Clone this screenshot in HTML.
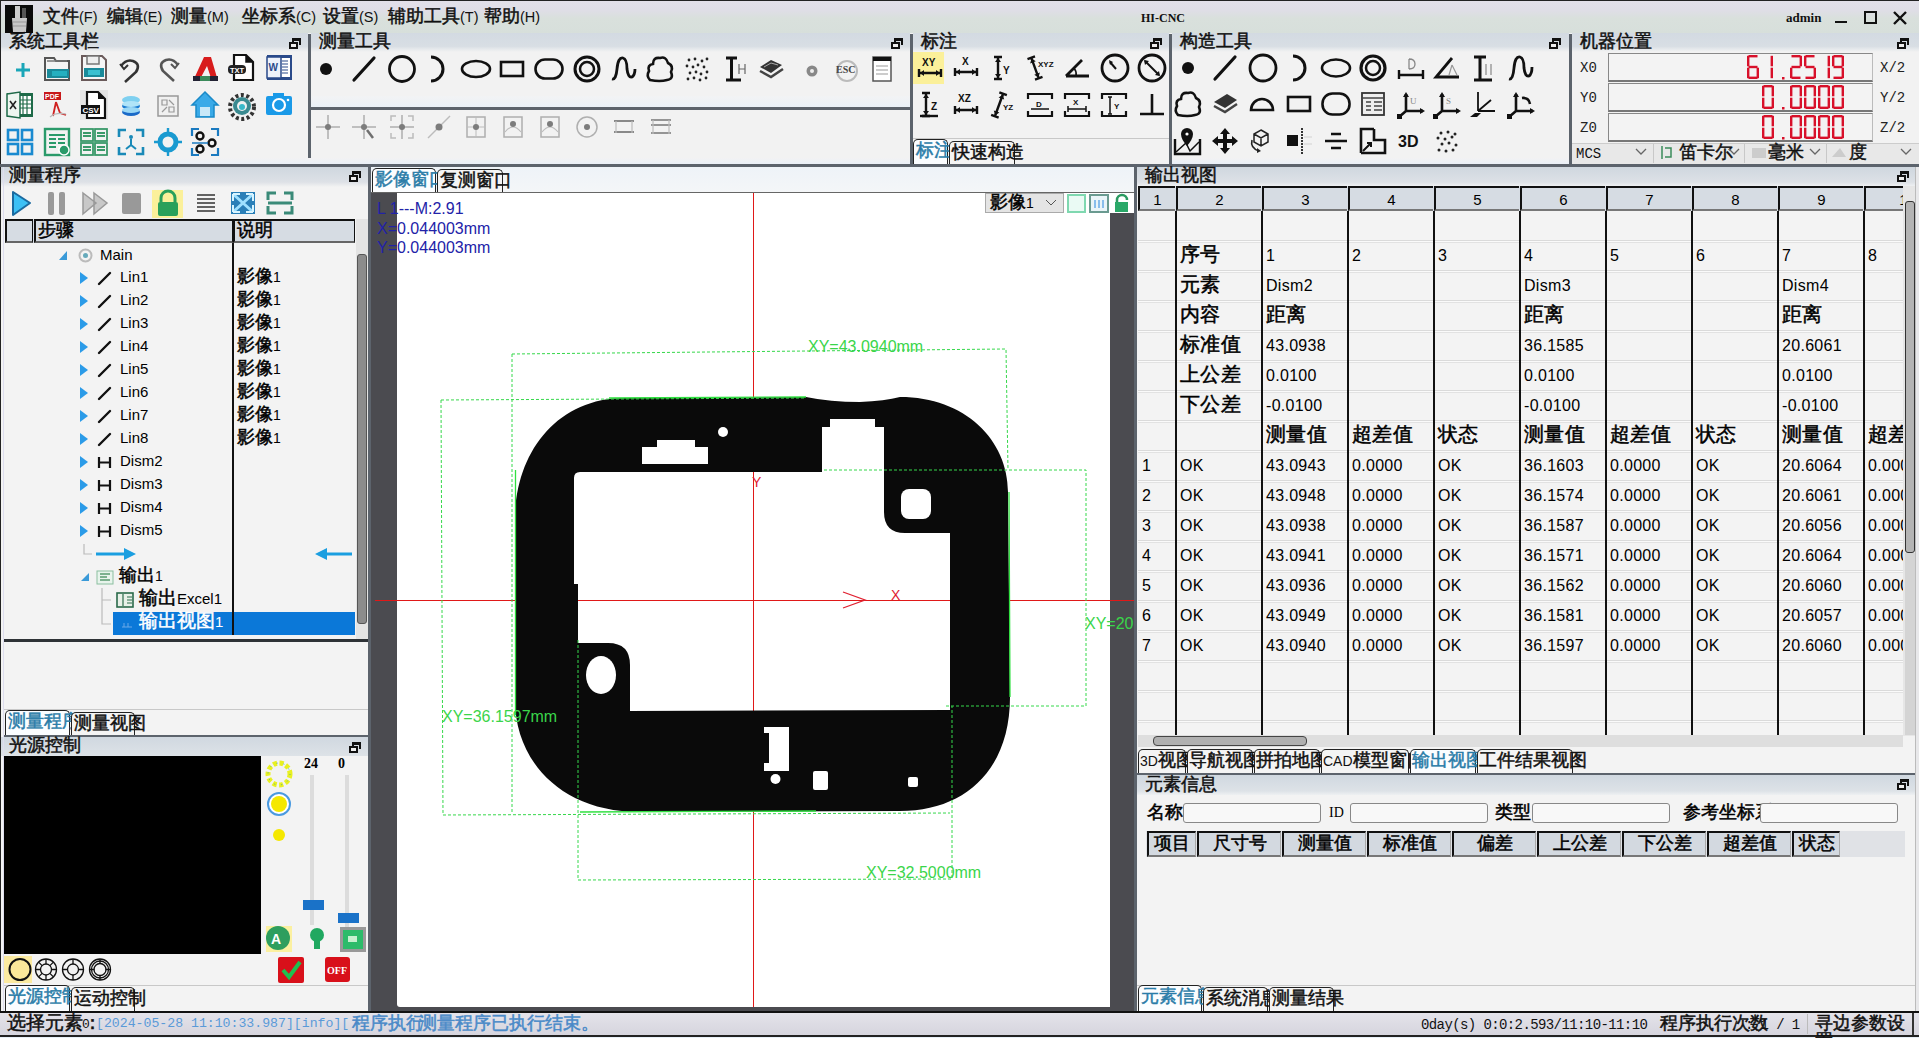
<!DOCTYPE html>
<html><head><meta charset="utf-8">
<style>
*{margin:0;padding:0;box-sizing:border-box}
html,body{width:1919px;height:1038px;overflow:hidden;background:#f3f3f3;font-family:"Liberation Sans",sans-serif;font-size:14px;color:#000}
.a{position:absolute}
.hdr{position:absolute;height:19px;background:linear-gradient(#d3dae2 0%,#d8dee4 70%,#e6e9ec 85%,#f2f2f2 100%);font-size:14px;line-height:18px;padding-left:8px;color:#111}
.vsep{position:absolute;width:3px;background:#5c636c}
.hsep{position:absolute;height:3px;background:#5c636c}
.flt{position:absolute;width:12px;height:11px}
.flt:before{content:"";position:absolute;left:3px;top:0;width:9px;height:7px;border:2px solid #111;border-bottom:0;box-sizing:border-box;border-top-width:3px}
.flt:after{content:"";position:absolute;left:0;top:4px;width:9px;height:7px;border:2px solid #111;box-sizing:border-box;background:#eee}
.tab{position:absolute;height:24px;border:1.5px solid #222;border-bottom:0;border-radius:5px 5px 0 0;background:#f4f4f4;font-size:14px;line-height:22px;padding:0 2px;color:#111;white-space:nowrap}
.tab.sel{color:#2a7ca8;background:#fbfdff}
.mono{font-family:"Liberation Mono",monospace}
.serif{font-family:"Liberation Serif",serif}
.c{font-size:1.25em;line-height:0;-webkit-text-stroke:0.5px}
</style></head><body>
<!-- outer frame -->
<div class="a" style="left:0;top:0;width:1919px;height:1px;background:#222"></div>
<div class="a" style="left:0;top:0;width:1px;height:1038px;background:#222"></div>

<!-- menu bar -->
<div class="a" style="left:1px;top:1px;width:1918px;height:32px;background:linear-gradient(#e2e0e9 0%,#dfdee6 30%,#d9e0dc 55%,#d7dfdb 100%)"></div>
<div class="a" style="left:5px;top:5px;width:28px;height:28px;background:#0a0a0a"></div>
<svg class="a" style="left:5px;top:5px" width="28" height="28"><rect x="10" y="1" width="5" height="12" fill="#ccc"/><rect x="17" y="3" width="4" height="10" fill="#555"/><path d="M7 13 H22 L21 27 H8 Z" fill="#c8c8c8"/><path d="M8 17h13M8 21h13" stroke="#999" stroke-width="1"/></svg>
<div class="a" style="left:43px;top:8px;font-size:14.5px;line-height:18px;white-space:nowrap;color:#111"><span class="c">文件</span>(F)</div><div class="a" style="left:107px;top:8px;font-size:14.5px;line-height:18px;white-space:nowrap;color:#111"><span class="c">编辑</span>(E)</div><div class="a" style="left:171px;top:8px;font-size:14.5px;line-height:18px;white-space:nowrap;color:#111"><span class="c">测量</span>(M)</div><div class="a" style="left:242px;top:8px;font-size:14.5px;line-height:18px;white-space:nowrap;color:#111"><span class="c">坐标系</span>(C)</div><div class="a" style="left:323px;top:8px;font-size:14.5px;line-height:18px;white-space:nowrap;color:#111"><span class="c">设置</span>(S)</div><div class="a" style="left:388px;top:8px;font-size:14.5px;line-height:18px;white-space:nowrap;color:#111"><span class="c">辅助工具</span>(T)</div><div class="a" style="left:484px;top:8px;font-size:14.5px;line-height:18px;white-space:nowrap;color:#111"><span class="c">帮助</span>(H)</div>
<div class="a serif" style="left:1141px;top:11px;font-size:12px;font-weight:bold;color:#111">HI-CNC</div>
<div class="a serif" style="left:1786px;top:10px;font-size:13px;font-weight:bold;color:#111">admin</div>
<div class="a" style="left:1835px;top:21px;width:12px;height:2px;background:#111"></div>
<div class="a" style="left:1864px;top:11px;width:13px;height:13px;border:2px solid #111"></div>
<svg class="a" style="left:1892px;top:10px" width="16" height="16"><path d="M2 2 L14 14 M14 2 L2 14" stroke="#111" stroke-width="2.4"/></svg>

<!-- toolbar area -->
<div class="a" style="left:1px;top:33px;width:1918px;height:131px;background:#f2f2f2"></div>
<div class="hdr" style="left:1px;top:33px;width:307px"><span class="c">系统工具栏</span></div>
<div class="hdr" style="left:311px;top:33px;width:599px"><span class="c">测量工具</span></div>
<div class="hdr" style="left:913px;top:33px;width:256px"><span class="c">标注</span></div>
<div class="hdr" style="left:1172px;top:33px;width:397px"><span class="c">构造工具</span></div>
<div class="hdr" style="left:1572px;top:33px;width:347px"><span class="c">机器位置</span></div>
<div class="flt" style="left:289px;top:38px"></div>
<div class="flt" style="left:891px;top:38px"></div>
<div class="flt" style="left:1150px;top:38px"></div>
<div class="flt" style="left:1549px;top:38px"></div>
<div class="flt" style="left:1897px;top:38px"></div>
<svg class="a" style="left:0;top:0" width="310" height="164"><g transform="translate(8,55)"><path d="M15 8v14M8 15h14" stroke="#1aa6b8" stroke-width="3"/></g><g transform="translate(42,53)"><path d="M3 5h9l2 3h13v19H3z" fill="#f4f4f4" stroke="#555" stroke-width="2"/><path d="M5 8h20" stroke="#777" stroke-width="1.5"/><rect x="5" y="16" width="22" height="9" fill="#1a8a9a"/><rect x="10" y="18" width="15" height="5" fill="#25b0c0"/></g><g transform="translate(79,53)"><path d="M3 3h20l4 4v20H3z" fill="#f6f6f6" stroke="#6a5a5a" stroke-width="2"/><rect x="8" y="3" width="12" height="8" fill="#eee" stroke="#777" stroke-width="1.5"/><rect x="5" y="15" width="20" height="9" fill="#1a8a9a"/><rect x="9" y="17" width="12" height="5" fill="#3ac0d0"/></g><g transform="translate(116,55)"><path d="M5 11 Q10 4 17 6 Q25 9 20 17 L9 27" fill="none" stroke="#333" stroke-width="2.6"/><path d="M4 9 L8 14 L12 10" fill="none" stroke="#333" stroke-width="2"/></g><g transform="translate(153,54)"><path d="M25 11 Q20 4 13 6 Q5 9 10 17 L21 27" fill="none" stroke="#555" stroke-width="2.6"/><path d="M26 9 L22 14 L18 10" fill="none" stroke="#555" stroke-width="2"/></g><g transform="translate(190,54)"><path d="M3 27 L14 3 L21 3 L28 27 L22 27 L17 12 L9 27 Z" fill="#d81c1c"/><rect x="3" y="22" width="25" height="5" fill="#223"/><rect x="10" y="22" width="10" height="5" fill="#3a8a5a"/></g><g transform="translate(227,53)"><path d="M7 2h12l7 7v18H7z" fill="#fff" stroke="#111" stroke-width="2.2"/><path d="M19 2v7h7" fill="#111" stroke="#111" stroke-width="1.5"/><rect x="1" y="12" width="18" height="9" rx="4" fill="#222"/><text x="3" y="20" font-size="7.5" font-weight="bold" fill="#fff" font-family="Liberation Sans">TXT</text></g><g transform="translate(264,53)"><rect x="3" y="2" width="25" height="25" fill="#2a4a8a"/><rect x="16" y="5" width="10" height="19" fill="#fff"/><path d="M18 8h6M18 11h6M18 14h6M18 17h6M18 20h6" stroke="#2a4a8a" stroke-width="1.2"/><rect x="3" y="4" width="14" height="21" fill="#eef2fa" stroke="#2a4a8a" stroke-width="1.5"/><text x="4.5" y="18" font-size="10" font-weight="bold" fill="#2a4a8a" font-family="Liberation Sans">W</text></g><g transform="translate(5,90)"><rect x="2" y="3" width="26" height="24" fill="#1e6a48"/><rect x="14" y="6" width="12" height="18" fill="#fff"/><path d="M14 10h12M14 14h12M14 18h12M18 6v18M22 6v18" stroke="#1e6a48" stroke-width="1.2"/><path d="M2 4 L15 2 V28 L2 26 Z" fill="#eef6f0" stroke="#1e6a48" stroke-width="1.5"/><path d="M5 11 L11 19 M11 11 L5 19" stroke="#222" stroke-width="1.6"/></g><g transform="translate(42,90)"><rect x="2" y="2" width="17" height="8" fill="#c8181a"/><text x="3" y="9" font-size="7" font-weight="bold" fill="#fff" font-family="Liberation Sans">PDF</text><path d="M14 12 L11 26 M14 12 L18 23 L24 25" fill="none" stroke="#d02020" stroke-width="1.8"/><path d="M8 27 Q14 22 24 24" fill="none" stroke="#bbb" stroke-width="1.2"/></g><g transform="translate(79,90)"><rect x="1" y="0" width="28" height="30" fill="#e4e4e4"/><path d="M8 2h11l7 7v19H8z" fill="#fff" stroke="#111" stroke-width="2.2"/><path d="M19 2v7h7" fill="#111"/><rect x="2" y="15" width="19" height="9" fill="#111"/><text x="3.5" y="23" font-size="8" font-weight="bold" fill="#fff" font-family="Liberation Sans">CSV</text></g><g transform="translate(116,91)"><ellipse cx="15" cy="9" rx="9" ry="4" fill="#7fd0f0"/><ellipse cx="15" cy="15" rx="9" ry="4" fill="#1a7ad0"/><ellipse cx="15" cy="13" rx="9" ry="3" fill="#b0e4f8"/><ellipse cx="15" cy="21" rx="9" ry="4" fill="#1a6ac8"/><ellipse cx="15" cy="19" rx="9" ry="3" fill="#9ad8f6"/></g><g transform="translate(153,91)"><rect x="5" y="5" width="20" height="20" fill="#f0f0f0" stroke="#999" stroke-width="1.5"/><path d="M9 9h5v5H9zM16 16h5v5h-5zM16 9l5 5M9 21l5-5" fill="none" stroke="#999" stroke-width="1.2"/></g><g transform="translate(190,90)"><path d="M15 2 L28 15 L24 15 L24 27 L6 27 L6 15 L2 15 Z" fill="#3aaae8" stroke="#1a8ac8" stroke-width="1.5"/><rect x="10" y="17" width="10" height="9" fill="#c8e8f8"/></g><g transform="translate(227,92)"><circle cx="15" cy="15" r="12" fill="none" stroke="#333" stroke-width="4" stroke-dasharray="3 2.5"/><circle cx="15" cy="14" r="9" fill="#3a8a90"/><circle cx="15" cy="14" r="5" fill="#f0f0f0"/><circle cx="15" cy="15" r="3" fill="#3ab8c8"/></g><g transform="translate(264,90)"><rect x="2" y="6" width="26" height="19" rx="2" fill="#1a9ae8"/><rect x="9" y="3" width="11" height="5" fill="#1a9ae8"/><circle cx="15" cy="15" r="6" fill="none" stroke="#fff" stroke-width="2.2"/><circle cx="24" cy="10" r="1.3" fill="#fff"/></g><g transform="translate(5,127)"><g fill="none" stroke="#1a8ad0" stroke-width="2.6"><rect x="3" y="3" width="10" height="10"/><rect x="17" y="3" width="10" height="10"/><rect x="3" y="17" width="10" height="10"/><rect x="17" y="17" width="10" height="10"/></g></g><g transform="translate(42,127)"><rect x="3" y="2" width="24" height="26" fill="none" stroke="#2a9a6a" stroke-width="2.4"/><path d="M7 8h16M7 12h7M16 12h7M7 16h7M16 16h7M7 20h7" stroke="#2a9a6a" stroke-width="2.2"/><circle cx="22" cy="23" r="5" fill="#2a9a6a" stroke="#fff" stroke-width="1.5"/></g><g transform="translate(79,127)"><g fill="none" stroke="#3a9a6a" stroke-width="1.8"><rect x="2" y="2" width="12" height="12"/><rect x="16" y="2" width="12" height="12"/><rect x="2" y="16" width="12" height="12"/><rect x="16" y="16" width="12" height="12"/><path d="M4 6h8M4 9h8M18 6h8M18 9h8M4 20h8M4 23h8M18 20h8M18 23h8"/></g></g><g transform="translate(116,127)"><path d="M3 10V3h7M20 3h7v7M3 20v7h7M20 27h7v-7" fill="none" stroke="#1a8ab8" stroke-width="2.6"/><circle cx="15" cy="10" r="2" fill="#1a8ab8"/><path d="M15 12v6M10 22l5-4 5 4" stroke="#1a8ab8" stroke-width="2" fill="none"/></g><g transform="translate(153,127)"><circle cx="15" cy="15" r="8" fill="none" stroke="#1a9ad0" stroke-width="5"/><path d="M15 1v6M15 23v6M1 15h6M23 15h6" stroke="#1a9ad0" stroke-width="2.4"/></g><g transform="translate(190,127)"><path d="M2 9V2h7M21 2h7v7M2 21v7h7M21 28h7v-7" fill="none" stroke="#1a7ac0" stroke-width="2.2"/><circle cx="10" cy="9" r="3.5" fill="none" stroke="#111" stroke-width="2.4"/><circle cx="10" cy="22" r="3.5" fill="none" stroke="#111" stroke-width="2.4"/><circle cx="22" cy="16" r="3.5" fill="none" stroke="#111" stroke-width="2.4"/><path d="M2 16h16" stroke="#1a7ac0" stroke-width="1.5"/></g></svg>
<div class="vsep" style="left:308px;top:34px;height:130px"></div>
<svg class="a" style="left:0;top:0" width="910" height="164"><g transform="translate(311,54)"><circle cx="15" cy="15" r="6" fill="#111"/></g><g transform="translate(349,54)"><path d="M5 26 L25 4" stroke="#111" stroke-width="3.2" stroke-linecap="round"/></g><g transform="translate(387,54)"><circle cx="15" cy="15" r="12.5" fill="none" stroke="#111" stroke-width="2.8"/></g><g transform="translate(422,54)"><path d="M9 3 A12 12 0 0 1 9 27" fill="none" stroke="#111" stroke-width="3"/></g><g transform="translate(461,54)"><ellipse cx="15" cy="15" rx="14" ry="8" fill="none" stroke="#111" stroke-width="2.6"/></g><g transform="translate(497,54)"><rect x="4" y="8" width="22" height="14" fill="none" stroke="#111" stroke-width="2.6"/></g><g transform="translate(534,54)"><rect x="1.5" y="5.5" width="27" height="19" rx="9.5" fill="none" stroke="#111" stroke-width="2.6"/></g><g transform="translate(572,54)"><circle cx="15" cy="15" r="12" fill="none" stroke="#111" stroke-width="3"/><circle cx="15" cy="15" r="7" fill="none" stroke="#111" stroke-width="2.5"/></g><g transform="translate(609,54)"><path d="M3 25 Q7 26 8 15 Q9 3 14 4 Q18 5 18 15 Q19 24 23 23 Q26 21 26 15" fill="none" stroke="#111" stroke-width="2.8"/></g><g transform="translate(645,54)"><path d="M5 26 Q1 22 4 17 Q2 11 8 10 Q8 3 15 4 Q21 2 23 9 Q29 12 26 18 Q29 25 22 26 Q15 28 5 26 Z" fill="none" stroke="#111" stroke-width="2.6"/></g><g transform="translate(682,54)"><g fill="#222"><circle cx="7" cy="6" r="1.4"/><circle cx="13" cy="5" r="1.4"/><circle cx="20" cy="7" r="1.4"/><circle cx="25" cy="5" r="1.4"/><circle cx="5" cy="12" r="1.4"/><circle cx="11" cy="13" r="1.4"/><circle cx="16" cy="11" r="1.4"/><circle cx="22" cy="13" r="1.4"/><circle cx="8" cy="19" r="1.4"/><circle cx="14" cy="18" r="1.4"/><circle cx="19" cy="20" r="1.4"/><circle cx="25" cy="18" r="1.4"/><circle cx="6" cy="25" r="1.4"/><circle cx="12" cy="24" r="1.4"/><circle cx="18" cy="26" r="1.4"/><circle cx="24" cy="24" r="1.4"/></g></g><g transform="translate(720,54)"><path d="M6 4h11M6 26h15M11.5 4v22" stroke="#111" stroke-width="3"/><path d="M19 10v10M25 10v10M19 15h6" stroke="#666" stroke-width="1.2"/></g><g transform="translate(756,54)"><path d="M4 17 L15 23 L27 15" fill="none" stroke="#444" stroke-width="2.5"/><path d="M4 13 L15 6 L26 11 L15 19 Z" fill="#333"/><path d="M8 13 L15 9 L22 11" fill="none" stroke="#aaa" stroke-width="1"/></g><g transform="translate(797,56)"><circle cx="15" cy="15" r="5.5" fill="#888"/><circle cx="15" cy="15" r="2" fill="#eee"/></g><g transform="translate(831,55)"><circle cx="16" cy="16" r="10" fill="none" stroke="#bbb" stroke-width="2"/><text x="5" y="18" font-size="10" font-weight="bold" fill="#444" font-family="Liberation Serif">ESC</text></g><g transform="translate(867,54)"><rect x="6" y="3" width="18" height="24" fill="#fff" stroke="#555" stroke-width="1.5"/><rect x="6" y="3" width="18" height="4" fill="#111"/><path d="M9 12h12M9 16h12M9 20h12" stroke="#999" stroke-width="1"/></g><g transform="translate(313,112)"><g opacity="0.75"><path d="M3 15h24M15 3v24" stroke="#999" stroke-width="1.5"/><circle cx="15" cy="15" r="3" fill="#555"/></g></g><g transform="translate(349,112)"><g opacity="0.75"><path d="M3 15h24M15 3v24" stroke="#999" stroke-width="1.5"/><circle cx="15" cy="15" r="3" fill="#555"/><path d="M18 18 L24 26" stroke="#444" stroke-width="2.5"/></g></g><g transform="translate(387,112)"><g opacity="0.75"><path d="M3 15h24M15 3v24" stroke="#999" stroke-width="1.5"/><circle cx="15" cy="15" r="3" fill="#555"/><path d="M4 9V4h5M21 4h5v5M4 21v5h5M21 26h5v-5" fill="none" stroke="#aaa" stroke-width="1.5"/></g></g><g transform="translate(424,112)"><g opacity="0.75"><path d="M4 26 L26 4" stroke="#aaa" stroke-width="1.5"/><circle cx="15" cy="15" r="3.5" fill="#555"/></g></g><g transform="translate(461,112)"><g opacity="0.75"><rect x="6" y="5" width="18" height="20" fill="none" stroke="#999" stroke-width="1.5"/><path d="M6 15h18M15 5v20" stroke="#aaa" stroke-width="1"/><circle cx="15" cy="15" r="3" fill="#555"/></g></g><g transform="translate(498,112)"><g opacity="0.75"><rect x="6" y="5" width="18" height="20" fill="none" stroke="#999" stroke-width="1.5"/><path d="M7 20 Q15 10 23 20" fill="none" stroke="#aaa" stroke-width="1.2"/><circle cx="15" cy="12" r="3" fill="#555"/></g></g><g transform="translate(535,112)"><g opacity="0.75"><rect x="6" y="5" width="18" height="20" fill="none" stroke="#999" stroke-width="1.5"/><path d="M7 20 Q15 10 23 20" fill="none" stroke="#aaa" stroke-width="1.2"/><circle cx="15" cy="12" r="3" fill="#555"/></g></g><g transform="translate(572,112)"><g opacity="0.75"><circle cx="15" cy="15" r="10" fill="none" stroke="#999" stroke-width="1.5"/><circle cx="15" cy="15" r="3" fill="#555"/></g></g><g transform="translate(609,112)"><g opacity="0.75"><path d="M5 9h20M5 20h20" stroke="#666" stroke-width="2"/><path d="M7 9v12M23 9v12" stroke="#aaa" stroke-width="1.2"/></g></g><g transform="translate(646,112)"><g opacity="0.75"><path d="M5 8h20M5 13h20M5 21h20" stroke="#777" stroke-width="1.8"/><path d="M7 8v14M23 8v14" stroke="#aaa" stroke-width="1.2"/></g></g></svg>
<div class="vsep" style="left:910px;top:34px;height:130px"></div>
<svg class="a" style="left:0;top:0" width="1170" height="164"><rect x="913" y="52" width="31" height="32" fill="#fbf09a"/><g transform="translate(915,53)"><text x="7" y="13" font-size="10" font-family="Liberation Sans" font-weight="bold" fill="#111">XY</text><path d="M4 16v8M26 16v8M4 20h22" stroke="#111" stroke-width="2.4"/><path d="M5 20l4-3v6zM25 20l-4-3v6z" fill="#111"/></g><g transform="translate(951,53)"><text x="11" y="12" font-size="10" font-family="Liberation Sans" font-weight="bold" fill="#111">X</text><path d="M4 15v8M26 15v8M4 19h22" stroke="#111" stroke-width="2.4"/><path d="M5 19l4-3v6zM25 19l-4-3v6z" fill="#111"/></g><g transform="translate(987,53)"><path d="M7 4h8M7 26h8M11 4v22" stroke="#111" stroke-width="2.4"/><path d="M11 5l-3 4h6zM11 25l-3-4h6z" fill="#111"/><text x="16" y="21" font-size="10" font-family="Liberation Sans" font-weight="bold" fill="#111">Y</text></g><g transform="translate(1025,53)"><g transform="rotate(-20 10 15)"><path d="M6 4h8M6 26h8M10 4v22" stroke="#111" stroke-width="2.4"/><path d="M10 5l-3 4h6zM10 25l-3-4h6z" fill="#111"/></g><text x="13" y="14" font-size="8" font-family="Liberation Sans" font-weight="bold" fill="#111">XYZ</text></g><g transform="translate(1062,53)"><path d="M4 23 L20 7 M4 23 H27" stroke="#111" stroke-width="2.8" fill="none"/><path d="M12 15 Q15 19 14 23" stroke="#111" stroke-width="1.5" fill="none"/></g><g transform="translate(1100,53)"><circle cx="15" cy="15" r="13" fill="none" stroke="#111" stroke-width="2.8"/><path d="M10 9 L16 16" stroke="#111" stroke-width="2"/><path d="M9 7l1 5 3-3z" fill="#111"/></g><g transform="translate(1137,53)"><circle cx="15" cy="15" r="13" fill="none" stroke="#111" stroke-width="2.8"/><path d="M8 8 L22 22" stroke="#111" stroke-width="2"/><path d="M7 7l1 5 4-4zM23 23l-1-5-4 4z" fill="#111"/></g><g transform="translate(915,90)"><path d="M7 3h8M7 26h8M11 3v23" stroke="#111" stroke-width="2.4"/><path d="M11 4l-3 4h6zM11 25l-3-4h6z" fill="#111"/><text x="16" y="20" font-size="10" font-family="Liberation Sans" font-weight="bold" fill="#111">Z</text><path d="M5 26h18" stroke="#111" stroke-width="2.4"/></g><g transform="translate(951,90)"><text x="7" y="12" font-size="10" font-family="Liberation Sans" font-weight="bold" fill="#111">XZ</text><path d="M4 16v8M26 16v8M4 20h22" stroke="#111" stroke-width="2.4"/><path d="M5 20l4-3v6zM25 20l-4-3v6z" fill="#111"/></g><g transform="translate(988,90)"><g transform="rotate(20 11 15)"><path d="M7 3h8M7 27h8M11 3v24" stroke="#111" stroke-width="2.4"/><path d="M11 4l-3 4h6zM11 26l-3-4h6z" fill="#111"/></g><text x="15" y="20" font-size="8" font-family="Liberation Sans" font-weight="bold" fill="#111">YZ</text></g><g transform="translate(1025,90)"><path d="M3 9V4h24v5M3 21v5h24v-5" fill="none" stroke="#111" stroke-width="2.2"/><path d="M6 19h18" stroke="#111" stroke-width="1.5"/><text x="11" y="17" font-size="8" font-family="Liberation Sans" font-weight="bold" fill="#111">D</text></g><g transform="translate(1062,90)"><path d="M3 9V4h24v5M3 21v5h24v-5" fill="none" stroke="#111" stroke-width="2.2"/><path d="M6 19h18M6 16v6M24 16v6" stroke="#111" stroke-width="1.5"/><text x="11" y="15" font-size="8" font-family="Liberation Sans" font-weight="bold" fill="#111">X</text></g><g transform="translate(1099,90)"><path d="M3 9V4h24v5M3 21v5h24v-5" fill="none" stroke="#111" stroke-width="2.2"/><path d="M11 7v17M9 7h4M9 24h4" stroke="#111" stroke-width="1.5"/><text x="15" y="19" font-size="8" font-family="Liberation Sans" font-weight="bold" fill="#111">Y</text></g><g transform="translate(1137,90)"><path d="M3 24h24M15 4v20" stroke="#111" stroke-width="2.6"/></g></svg><div class="a" style="left:913px;top:138px;width:256px;height:1px;background:#c8c8c8"></div><div class="tab sel" style="left:913px;top:139px;width:35px;height:25px"><span class="c">标注</span></div><div class="tab" style="left:949px;top:141px;width:66px;height:23px"><span class="c">快速构造</span></div>
<div class="vsep" style="left:1169px;top:34px;height:130px"></div>
<svg class="a" style="left:0;top:0" width="1570" height="164"><g transform="translate(1173,53)"><circle cx="15" cy="15" r="6" fill="#111"/></g><g transform="translate(1210,53)"><path d="M5 26 L25 4" stroke="#111" stroke-width="3.2" stroke-linecap="round"/></g><g transform="translate(1248,53)"><circle cx="15" cy="15" r="13" fill="none" stroke="#111" stroke-width="2.8"/></g><g transform="translate(1284,53)"><path d="M9 3 A12 12 0 0 1 9 27" fill="none" stroke="#111" stroke-width="3"/></g><g transform="translate(1321,53)"><ellipse cx="15" cy="15" rx="14" ry="8.5" fill="none" stroke="#111" stroke-width="2.6"/></g><g transform="translate(1358,53)"><circle cx="15" cy="15" r="12" fill="none" stroke="#111" stroke-width="3.2"/><circle cx="15" cy="15" r="7" fill="none" stroke="#111" stroke-width="2.5"/></g><g transform="translate(1396,53)"><path d="M3 17v9M27 17v9M3 22h24" stroke="#111" stroke-width="2.4"/><path d="M13 6v10M13 6q6 0 6 5t-6 5" stroke="#888" stroke-width="1.3" fill="none"/></g><g transform="translate(1432,53)"><path d="M27 24 H4 L20 5" stroke="#111" stroke-width="2.8" fill="none"/><path d="M20 12 L25 22 M20 12 L17 22" stroke="#999" stroke-width="1.2"/></g><g transform="translate(1469,53)"><path d="M5 4h12M5 27h18M11 4v23" stroke="#111" stroke-width="3"/><path d="M17 11v11M22 11v11" stroke="#888" stroke-width="1.2"/></g><g transform="translate(1506,53)"><path d="M3 26 Q7 27 8 15 Q9 3 14 4 Q18 5 18 15 Q19 24 23 23 Q26 21 26 14" fill="none" stroke="#111" stroke-width="2.8"/></g><g transform="translate(1173,89)"><path d="M5 26 Q1 22 4 17 Q2 11 8 10 Q8 3 15 4 Q21 2 23 9 Q29 12 26 18 Q29 25 22 26 Q15 28 5 26 Z" fill="none" stroke="#111" stroke-width="2.6"/></g><g transform="translate(1210,89)"><path d="M4 17 L15 23 L27 15" fill="none" stroke="#444" stroke-width="2.5"/><path d="M4 13 L17 5 L27 11 L15 19 Z" fill="#333"/></g><g transform="translate(1247,89)"><path d="M4 21 A11 11 0 0 1 26 21 Z" fill="none" stroke="#111" stroke-width="2.6"/></g><g transform="translate(1284,89)"><rect x="4" y="8" width="22" height="14" fill="none" stroke="#111" stroke-width="2.6"/></g><g transform="translate(1321,89)"><rect x="1.5" y="4.5" width="27" height="21" rx="10" fill="none" stroke="#111" stroke-width="2.6"/></g><g transform="translate(1358,89)"><rect x="4" y="4" width="22" height="22" fill="#eee" stroke="#333" stroke-width="1.8"/><path d="M4 9h22M8 13h5M16 13h8M8 17h5M16 17h8M8 21h5M16 21h8" stroke="#444" stroke-width="1.6"/></g><g transform="translate(1396,89)"><path d="M10 22 V5 M10 22 H27 M10 22 L3 28" stroke="#111" stroke-width="2.6" fill="none"/><path d="M10 3l-3 5h6zM29 22l-5-3v6z" fill="#111"/><rect x="1" y="25" width="5" height="5" fill="#111"/><text x="14" y="15" font-size="9" fill="#888" font-family="Liberation Serif">U</text></g><g transform="translate(1432,89)"><path d="M10 22 V5 M10 22 H27 M10 22 L3 28" stroke="#111" stroke-width="2.6" fill="none"/><path d="M10 3l-3 5h6zM29 22l-5-3v6z" fill="#111"/><rect x="1" y="25" width="5" height="5" fill="#111"/><text x="14" y="15" font-size="9" fill="#888" font-family="Liberation Serif">S</text></g><g transform="translate(1469,89)"><path d="M9 22 V3 M9 22 H26 M9 22 L22 11" stroke="#111" stroke-width="1.8" fill="none"/><path d="M1 28 L6 24 L12 24 L8 28 Z" fill="#111"/></g><g transform="translate(1506,89)"><path d="M10 22 V5 M10 22 H27 M10 22 L3 28" stroke="#111" stroke-width="2.6" fill="none"/><path d="M10 3l-3 5h6zM29 22l-5-3v6z" fill="#111"/><rect x="1" y="25" width="5" height="5" fill="#111"/><path d="M16 9 Q23 8 24 15" stroke="#111" stroke-width="2.5" fill="none"/></g><g transform="translate(1173,126)"><path d="M2 13v15h25V13" fill="none" stroke="#111" stroke-width="2.4"/><path d="M3 26 L13 17 L17 25 L26 16" fill="none" stroke="#111" stroke-width="1.5"/><path d="M14 2 a6 6 0 0 1 6 6 q0 5 -6 12 q-6 -7 -6 -12 a6 6 0 0 1 6 -6z" fill="#111"/><circle cx="14" cy="8" r="1.6" fill="#fff"/></g><g transform="translate(1210,126)"><path d="M15 2 L20 8 H17 V13 H22 V10 L28 15 L22 20 V17 H17 V22 H20 L15 28 L10 22 H13 V17 H8 V20 L2 15 L8 10 V13 H13 V8 H10 Z" fill="#111"/></g><g transform="translate(1247,126)"><path d="M14 4 L21 8 V16 L14 20 L7 16 V8 Z M7 8 L14 12 L21 8 M14 12 V20" fill="none" stroke="#222" stroke-width="1.5"/><path d="M5 14 Q3 22 12 25" fill="none" stroke="#222" stroke-width="1.6"/><path d="M10 22l4 3-4 2z" fill="#222"/></g><g transform="translate(1284,126)"><rect x="3" y="9" width="11" height="11" fill="#111"/><path d="M18 2v26" stroke="#333" stroke-width="2" stroke-dasharray="2 1"/><path d="M20 11h8M20 18h8" stroke="#ddd" stroke-width="1.5"/></g><g transform="translate(1321,126)"><path d="M10 8h10M4 15h22M10 22h10" stroke="#111" stroke-width="2.6"/></g><g transform="translate(1358,126)"><path d="M3 27 V3 H16 M3 27 H27 V14 H16 V3" fill="none" stroke="#111" stroke-width="2.6"/><path d="M5 25 L12 18 M9 17h4v4" stroke="#111" stroke-width="2" fill="none"/></g><g transform="translate(1396,126)"><text x="2" y="21" font-size="16" font-family="Liberation Sans" font-weight="bold" fill="#111">3D</text></g><g transform="translate(1432,126)"><g fill="#222"><circle cx="9" cy="7" r="1.5"/><circle cx="16" cy="6" r="1.5"/><circle cx="23" cy="8" r="1.5"/><circle cx="6" cy="12" r="1.5"/><circle cx="13" cy="13" r="1.5"/><circle cx="20" cy="11" r="1.5"/><circle cx="10" cy="18" r="1.5"/><circle cx="17" cy="17" r="1.5"/><circle cx="24" cy="19" r="1.5"/><circle cx="7" cy="24" r="1.5"/><circle cx="14" cy="25" r="1.5"/><circle cx="21" cy="24" r="1.5"/></g></g></svg>
<div class="vsep" style="left:1569px;top:34px;height:130px"></div>
<div class="a" style="left:311px;top:96px;width:599px;height:11px;background:linear-gradient(#f2f3f4,#eaf1f8)"></div><div class="a" style="left:311px;top:107px;width:599px;height:3px;background:#5c636c"></div><div class="a" style="left:1px;top:158px;width:909px;height:6px;background:linear-gradient(#f2f2f3,#eaf0f7)"></div><div class="a" style="left:1172px;top:158px;width:397px;height:6px;background:linear-gradient(#f2f2f3,#eaf0f7)"></div>
<div class="a" style="left:1572px;top:52px;width:347px;height:112px;background:#f2f2f2"></div>
<div class="a" style="left:1608px;top:53px;width:265px;height:29px;background:#f3f3f3;border:1px solid #888;border-bottom:2px solid #777;border-right:1px solid #bbb"></div>
<div class="a mono" style="left:1580px;top:60px;font-size:14px;line-height:16px;color:#222">X0</div>
<div class="a mono" style="left:1880px;top:60px;font-size:14px;line-height:16px;color:#222">X/2</div>
<div class="a" style="left:1608px;top:83px;width:265px;height:29px;background:#f3f3f3;border:1px solid #888;border-bottom:2px solid #777;border-right:1px solid #bbb"></div>
<div class="a mono" style="left:1580px;top:90px;font-size:14px;line-height:16px;color:#222">Y0</div>
<div class="a mono" style="left:1880px;top:90px;font-size:14px;line-height:16px;color:#222">Y/2</div>
<div class="a" style="left:1608px;top:113px;width:265px;height:29px;background:#f3f3f3;border:1px solid #888;border-bottom:2px solid #777;border-right:1px solid #bbb"></div>
<div class="a mono" style="left:1580px;top:120px;font-size:14px;line-height:16px;color:#222">Z0</div>
<div class="a mono" style="left:1880px;top:120px;font-size:14px;line-height:16px;color:#222">Z/2</div>
<svg class="a" style="left:0;top:0" width="1919" height="164"><rect x="1748.5" y="55.0" width="9.0" height="2.4" fill="#d8102a"/><rect x="1748.5" y="65.8" width="9.0" height="2.4" fill="#d8102a"/><rect x="1748.5" y="76.6" width="9.0" height="2.4" fill="#d8102a"/><rect x="1747.0" y="55.8" width="2.4" height="10.5" fill="#d8102a"/><rect x="1747.0" y="67.7" width="2.4" height="10.5" fill="#d8102a"/><rect x="1756.6" y="67.7" width="2.4" height="10.5" fill="#d8102a"/><rect x="1770.6" y="55.8" width="2.4" height="10.5" fill="#d8102a"/><rect x="1770.6" y="67.7" width="2.4" height="10.5" fill="#d8102a"/><rect x="1782" y="77" width="2.5" height="2.5" fill="#d8102a"/><rect x="1791.5" y="55.0" width="9.0" height="2.4" fill="#d8102a"/><rect x="1791.5" y="65.8" width="9.0" height="2.4" fill="#d8102a"/><rect x="1791.5" y="76.6" width="9.0" height="2.4" fill="#d8102a"/><rect x="1799.6" y="55.8" width="2.4" height="10.5" fill="#d8102a"/><rect x="1790.0" y="67.7" width="2.4" height="10.5" fill="#d8102a"/><rect x="1805.5" y="55.0" width="9.0" height="2.4" fill="#d8102a"/><rect x="1805.5" y="65.8" width="9.0" height="2.4" fill="#d8102a"/><rect x="1805.5" y="76.6" width="9.0" height="2.4" fill="#d8102a"/><rect x="1804.0" y="55.8" width="2.4" height="10.5" fill="#d8102a"/><rect x="1813.6" y="67.7" width="2.4" height="10.5" fill="#d8102a"/><rect x="1827.6" y="55.8" width="2.4" height="10.5" fill="#d8102a"/><rect x="1827.6" y="67.7" width="2.4" height="10.5" fill="#d8102a"/><rect x="1833.5" y="55.0" width="9.0" height="2.4" fill="#d8102a"/><rect x="1833.5" y="65.8" width="9.0" height="2.4" fill="#d8102a"/><rect x="1833.5" y="76.6" width="9.0" height="2.4" fill="#d8102a"/><rect x="1832.0" y="55.8" width="2.4" height="10.5" fill="#d8102a"/><rect x="1841.6" y="55.8" width="2.4" height="10.5" fill="#d8102a"/><rect x="1841.6" y="67.7" width="2.4" height="10.5" fill="#d8102a"/><rect x="1763.5" y="85.0" width="9.0" height="2.4" fill="#d8102a"/><rect x="1763.5" y="106.6" width="9.0" height="2.4" fill="#d8102a"/><rect x="1762.0" y="85.8" width="2.4" height="10.5" fill="#d8102a"/><rect x="1771.6" y="85.8" width="2.4" height="10.5" fill="#d8102a"/><rect x="1762.0" y="97.7" width="2.4" height="10.5" fill="#d8102a"/><rect x="1771.6" y="97.7" width="2.4" height="10.5" fill="#d8102a"/><rect x="1782" y="107" width="2.5" height="2.5" fill="#d8102a"/><rect x="1791.5" y="85.0" width="9.0" height="2.4" fill="#d8102a"/><rect x="1791.5" y="106.6" width="9.0" height="2.4" fill="#d8102a"/><rect x="1790.0" y="85.8" width="2.4" height="10.5" fill="#d8102a"/><rect x="1799.6" y="85.8" width="2.4" height="10.5" fill="#d8102a"/><rect x="1790.0" y="97.7" width="2.4" height="10.5" fill="#d8102a"/><rect x="1799.6" y="97.7" width="2.4" height="10.5" fill="#d8102a"/><rect x="1805.5" y="85.0" width="9.0" height="2.4" fill="#d8102a"/><rect x="1805.5" y="106.6" width="9.0" height="2.4" fill="#d8102a"/><rect x="1804.0" y="85.8" width="2.4" height="10.5" fill="#d8102a"/><rect x="1813.6" y="85.8" width="2.4" height="10.5" fill="#d8102a"/><rect x="1804.0" y="97.7" width="2.4" height="10.5" fill="#d8102a"/><rect x="1813.6" y="97.7" width="2.4" height="10.5" fill="#d8102a"/><rect x="1819.5" y="85.0" width="9.0" height="2.4" fill="#d8102a"/><rect x="1819.5" y="106.6" width="9.0" height="2.4" fill="#d8102a"/><rect x="1818.0" y="85.8" width="2.4" height="10.5" fill="#d8102a"/><rect x="1827.6" y="85.8" width="2.4" height="10.5" fill="#d8102a"/><rect x="1818.0" y="97.7" width="2.4" height="10.5" fill="#d8102a"/><rect x="1827.6" y="97.7" width="2.4" height="10.5" fill="#d8102a"/><rect x="1833.5" y="85.0" width="9.0" height="2.4" fill="#d8102a"/><rect x="1833.5" y="106.6" width="9.0" height="2.4" fill="#d8102a"/><rect x="1832.0" y="85.8" width="2.4" height="10.5" fill="#d8102a"/><rect x="1841.6" y="85.8" width="2.4" height="10.5" fill="#d8102a"/><rect x="1832.0" y="97.7" width="2.4" height="10.5" fill="#d8102a"/><rect x="1841.6" y="97.7" width="2.4" height="10.5" fill="#d8102a"/><rect x="1763.5" y="115.0" width="9.0" height="2.4" fill="#d8102a"/><rect x="1763.5" y="136.6" width="9.0" height="2.4" fill="#d8102a"/><rect x="1762.0" y="115.8" width="2.4" height="10.5" fill="#d8102a"/><rect x="1771.6" y="115.8" width="2.4" height="10.5" fill="#d8102a"/><rect x="1762.0" y="127.7" width="2.4" height="10.5" fill="#d8102a"/><rect x="1771.6" y="127.7" width="2.4" height="10.5" fill="#d8102a"/><rect x="1782" y="137" width="2.5" height="2.5" fill="#d8102a"/><rect x="1791.5" y="115.0" width="9.0" height="2.4" fill="#d8102a"/><rect x="1791.5" y="136.6" width="9.0" height="2.4" fill="#d8102a"/><rect x="1790.0" y="115.8" width="2.4" height="10.5" fill="#d8102a"/><rect x="1799.6" y="115.8" width="2.4" height="10.5" fill="#d8102a"/><rect x="1790.0" y="127.7" width="2.4" height="10.5" fill="#d8102a"/><rect x="1799.6" y="127.7" width="2.4" height="10.5" fill="#d8102a"/><rect x="1805.5" y="115.0" width="9.0" height="2.4" fill="#d8102a"/><rect x="1805.5" y="136.6" width="9.0" height="2.4" fill="#d8102a"/><rect x="1804.0" y="115.8" width="2.4" height="10.5" fill="#d8102a"/><rect x="1813.6" y="115.8" width="2.4" height="10.5" fill="#d8102a"/><rect x="1804.0" y="127.7" width="2.4" height="10.5" fill="#d8102a"/><rect x="1813.6" y="127.7" width="2.4" height="10.5" fill="#d8102a"/><rect x="1819.5" y="115.0" width="9.0" height="2.4" fill="#d8102a"/><rect x="1819.5" y="136.6" width="9.0" height="2.4" fill="#d8102a"/><rect x="1818.0" y="115.8" width="2.4" height="10.5" fill="#d8102a"/><rect x="1827.6" y="115.8" width="2.4" height="10.5" fill="#d8102a"/><rect x="1818.0" y="127.7" width="2.4" height="10.5" fill="#d8102a"/><rect x="1827.6" y="127.7" width="2.4" height="10.5" fill="#d8102a"/><rect x="1833.5" y="115.0" width="9.0" height="2.4" fill="#d8102a"/><rect x="1833.5" y="136.6" width="9.0" height="2.4" fill="#d8102a"/><rect x="1832.0" y="115.8" width="2.4" height="10.5" fill="#d8102a"/><rect x="1841.6" y="115.8" width="2.4" height="10.5" fill="#d8102a"/><rect x="1832.0" y="127.7" width="2.4" height="10.5" fill="#d8102a"/><rect x="1841.6" y="127.7" width="2.4" height="10.5" fill="#d8102a"/></svg>
<div class="a" style="left:1572px;top:143px;width:347px;height:21px;background:#e8e8e8;border-top:1px solid #ccc"></div>
<div class="a mono" style="left:1576px;top:146px;font-size:14px;line-height:16px;color:#111">MCS</div>
<div class="a" style="left:1653px;top:144px;width:1px;height:19px;background:#c8c8c8"></div><div class="a" style="left:1744px;top:144px;width:1px;height:19px;background:#c8c8c8"></div><div class="a" style="left:1826px;top:144px;width:1px;height:19px;background:#c8c8c8"></div>
<div class="a" style="left:1679px;top:144px;font-size:14px;line-height:18px;color:#111"><span class="c">笛卡尔</span></div>
<div class="a" style="left:1768px;top:144px;font-size:14px;line-height:18px;color:#111"><span class="c">毫米</span></div>
<div class="a" style="left:1849px;top:144px;font-size:14px;line-height:18px;color:#111"><span class="c">度</span></div>
<svg class="a" style="left:0;top:143px" width="1919" height="20"><path d="M1636 6 L1641 11 L1646 6" fill="none" stroke="#666" stroke-width="1.3"/><path d="M1729 6 L1734 11 L1739 6" fill="none" stroke="#666" stroke-width="1.3"/><path d="M1810 6 L1815 11 L1820 6" fill="none" stroke="#666" stroke-width="1.3"/><path d="M1901 6 L1906 11 L1911 6" fill="none" stroke="#666" stroke-width="1.3"/><path d="M1662 3v13M1665 5h6v9h-6" stroke="#3a8a5a" stroke-width="1.5" fill="none"/><rect x="1752" y="5" width="14" height="10" fill="#ccc"/><path d="M1832 14 L1840 5 L1846 14Z" fill="#ccc"/></svg>
<div class="hsep" style="left:0;top:164px;width:1919px"></div>

<!-- main area separators -->
<div class="vsep" style="left:368px;top:164px;height:848px"></div>
<div class="vsep" style="left:1134px;top:164px;height:848px"></div>


<!-- LEFT PANEL -->
<div class="a" style="left:1px;top:167px;width:367px;height:844px;background:#f3f3f3"></div>
<div class="hdr" style="left:1px;top:167px;width:367px;height:20px;line-height:18px;background:linear-gradient(#cfd7df 0%,#dde1e6 75%,#f3f3f3 100%)"><span class="c">测量程序</span></div>
<div class="flt" style="left:349px;top:171px"></div>
<!-- program toolbar -->
<svg class="a" style="left:0;top:188px" width="300" height="30">
 <path d="M13 4 L30 15 L13 27 Z" fill="#3cc0f5" stroke="#1a6aa0" stroke-width="2" stroke-linejoin="round"/>
 <rect x="48" y="4" width="6" height="23" rx="2" fill="#999"/><rect x="59" y="4" width="6" height="23" rx="2" fill="#999"/>
 <path d="M83 5 L96 15 L83 26 Z M94 5 L107 15 L94 26 Z" fill="#c8c8c8" stroke="#999" stroke-width="1.5"/>
 <rect x="122" y="5" width="19" height="21" rx="2" fill="#999"/>
 <rect x="152" y="2" width="31" height="29" fill="#fbf09a"/>
 <path d="M161 14 V10 a7 7 0 0 1 14 0 V14" fill="none" stroke="#2aa05a" stroke-width="3"/>
 <rect x="158" y="14" width="20" height="14" rx="2" fill="#2aa05a"/>
 <path d="M197 7h18M197 11h18M197 15h18M197 19h18M197 23h18" stroke="#333" stroke-width="1.6"/>
 <rect x="231" y="4" width="24" height="22" fill="#2a7fb8"/>
 <path d="M233 6 L253 24 M253 6 L233 24" stroke="#9fe0ff" stroke-width="3"/>
 <path d="M233 6h7M233 6v7M253 6h-7M253 6v7M233 24h7M233 24v-7M253 24h-7M253 24v-7" stroke="#d8f4ff" stroke-width="2"/>
 <path d="M268 12 V5 H276 M284 5 H292 V12 M268 18 V25 H276 M284 25 H292 V18 M268 15 H292" fill="none" stroke="#3a8a78" stroke-width="3"/>
</svg>
<!-- tree header -->
<div class="a" style="left:5px;top:219px;width:350px;height:24px;background:#d6dce3"></div>
<div class="a" style="left:5px;top:219px;width:28px;height:24px;border:2px solid #111;border-bottom-color:#666;border-right-width:1px"></div>
<div class="a" style="left:34px;top:219px;width:199px;height:24px;border:2px solid #111;border-bottom-color:#666;border-right-width:1px;font-size:14px;line-height:21px;padding-left:2px"><span class="c">步骤</span></div>
<div class="a" style="left:233px;top:219px;width:122px;height:24px;border:2px solid #111;border-bottom-color:#666;border-right-width:1px;font-size:14px;line-height:21px;padding-left:2px"><span class="c">说明</span></div>
<div class="a" style="left:232px;top:243px;width:2px;height:392px;background:#111"></div>
<!-- scrollbar -->
<div class="a" style="left:356px;top:219px;width:12px;height:420px;background:#e4e4e4"></div>
<div class="a" style="left:357px;top:254px;width:10px;height:370px;background:#8c8c8c;border:1px solid #555;border-radius:3px"></div>
<!-- tree rows -->
<div class="a" style="left:113px;top:612px;width:242px;height:23px;background:#0b78d8"></div>
<div class="a" style="left:232px;top:612px;width:2px;height:23px;background:#111"></div>
<svg class="a" style="left:56px;top:248px" width="40" height="16"><path d="M3 12 L11 12 L11 3 Z" fill="#3a9ad8"/><circle cx="29.5" cy="7.5" r="6" fill="none" stroke="#bbb" stroke-width="2"/><circle cx="29.5" cy="7.5" r="2.5" fill="#6ab"/></svg>
<div class="a" style="left:100px;top:246px;font-size:15px;line-height:18px">Main</div>
<svg class="a" style="left:78px;top:270px" width="36" height="16"><path d="M2 2 L10 8 L2 14 Z" fill="#2b9be8"/><path d="M21 14 L32 3" stroke="#111" stroke-width="2.4" stroke-linecap="round"/></svg>
<div class="a" style="left:120px;top:268px;font-size:15px;line-height:18px">Lin1</div>
<div class="a" style="left:237px;top:268px;font-size:14px;line-height:18px"><span class="c">影像</span>1</div>
<svg class="a" style="left:78px;top:293px" width="36" height="16"><path d="M2 2 L10 8 L2 14 Z" fill="#2b9be8"/><path d="M21 14 L32 3" stroke="#111" stroke-width="2.4" stroke-linecap="round"/></svg>
<div class="a" style="left:120px;top:291px;font-size:15px;line-height:18px">Lin2</div>
<div class="a" style="left:237px;top:291px;font-size:14px;line-height:18px"><span class="c">影像</span>1</div>
<svg class="a" style="left:78px;top:316px" width="36" height="16"><path d="M2 2 L10 8 L2 14 Z" fill="#2b9be8"/><path d="M21 14 L32 3" stroke="#111" stroke-width="2.4" stroke-linecap="round"/></svg>
<div class="a" style="left:120px;top:314px;font-size:15px;line-height:18px">Lin3</div>
<div class="a" style="left:237px;top:314px;font-size:14px;line-height:18px"><span class="c">影像</span>1</div>
<svg class="a" style="left:78px;top:339px" width="36" height="16"><path d="M2 2 L10 8 L2 14 Z" fill="#2b9be8"/><path d="M21 14 L32 3" stroke="#111" stroke-width="2.4" stroke-linecap="round"/></svg>
<div class="a" style="left:120px;top:337px;font-size:15px;line-height:18px">Lin4</div>
<div class="a" style="left:237px;top:337px;font-size:14px;line-height:18px"><span class="c">影像</span>1</div>
<svg class="a" style="left:78px;top:362px" width="36" height="16"><path d="M2 2 L10 8 L2 14 Z" fill="#2b9be8"/><path d="M21 14 L32 3" stroke="#111" stroke-width="2.4" stroke-linecap="round"/></svg>
<div class="a" style="left:120px;top:360px;font-size:15px;line-height:18px">Lin5</div>
<div class="a" style="left:237px;top:360px;font-size:14px;line-height:18px"><span class="c">影像</span>1</div>
<svg class="a" style="left:78px;top:385px" width="36" height="16"><path d="M2 2 L10 8 L2 14 Z" fill="#2b9be8"/><path d="M21 14 L32 3" stroke="#111" stroke-width="2.4" stroke-linecap="round"/></svg>
<div class="a" style="left:120px;top:383px;font-size:15px;line-height:18px">Lin6</div>
<div class="a" style="left:237px;top:383px;font-size:14px;line-height:18px"><span class="c">影像</span>1</div>
<svg class="a" style="left:78px;top:408px" width="36" height="16"><path d="M2 2 L10 8 L2 14 Z" fill="#2b9be8"/><path d="M21 14 L32 3" stroke="#111" stroke-width="2.4" stroke-linecap="round"/></svg>
<div class="a" style="left:120px;top:406px;font-size:15px;line-height:18px">Lin7</div>
<div class="a" style="left:237px;top:406px;font-size:14px;line-height:18px"><span class="c">影像</span>1</div>
<svg class="a" style="left:78px;top:431px" width="36" height="16"><path d="M2 2 L10 8 L2 14 Z" fill="#2b9be8"/><path d="M21 14 L32 3" stroke="#111" stroke-width="2.4" stroke-linecap="round"/></svg>
<div class="a" style="left:120px;top:429px;font-size:15px;line-height:18px">Lin8</div>
<div class="a" style="left:237px;top:429px;font-size:14px;line-height:18px"><span class="c">影像</span>1</div>
<svg class="a" style="left:78px;top:454px" width="36" height="16"><path d="M2 2 L10 8 L2 14 Z" fill="#2b9be8"/><path d="M21 3v11M32 3v11M21 8.5h11" stroke="#111" stroke-width="2.2"/></svg>
<div class="a" style="left:120px;top:452px;font-size:15px;line-height:18px">Dism2</div>
<svg class="a" style="left:78px;top:477px" width="36" height="16"><path d="M2 2 L10 8 L2 14 Z" fill="#2b9be8"/><path d="M21 3v11M32 3v11M21 8.5h11" stroke="#111" stroke-width="2.2"/></svg>
<div class="a" style="left:120px;top:475px;font-size:15px;line-height:18px">Dism3</div>
<svg class="a" style="left:78px;top:500px" width="36" height="16"><path d="M2 2 L10 8 L2 14 Z" fill="#2b9be8"/><path d="M21 3v11M32 3v11M21 8.5h11" stroke="#111" stroke-width="2.2"/></svg>
<div class="a" style="left:120px;top:498px;font-size:15px;line-height:18px">Dism4</div>
<svg class="a" style="left:78px;top:523px" width="36" height="16"><path d="M2 2 L10 8 L2 14 Z" fill="#2b9be8"/><path d="M21 3v11M32 3v11M21 8.5h11" stroke="#111" stroke-width="2.2"/></svg>
<div class="a" style="left:120px;top:521px;font-size:15px;line-height:18px">Dism5</div>
<svg class="a" style="left:80px;top:544px" width="280" height="20"><path d="M4 0v10h8" stroke="#bbb" stroke-width="1.2" fill="none"/><path d="M17 10 H127" stroke="none"/><path d="M17 10 H125" stroke="none"/></svg>
<svg class="a" style="left:84px;top:546px" width="275" height="16"><path d="M12 8 H42" stroke="#1a9ee0" stroke-width="3"/><path d="M40 2 L52 8 L40 14 Z" fill="#1a9ee0"/><path d="M240 8 H268" stroke="#1a9ee0" stroke-width="3"/><path d="M243 2 L231 8 L243 14 Z" fill="#1a9ee0"/></svg>
<svg class="a" style="left:78px;top:569px" width="36" height="16"><path d="M3 12 L11 12 L11 4 Z" fill="#3a9ad8"/><rect x="19" y="2" width="16" height="13" fill="#e8f4ec" stroke="#8bbfa0" stroke-width="1"/><path d="M22 5h10M22 8h7M22 11h10" stroke="#5a9a70" stroke-width="1.3"/></svg>
<div class="a" style="left:119px;top:567px;font-size:14px;line-height:18px"><span class="c">输出</span>1</div>
<svg class="a" style="left:95px;top:588px" width="40" height="46"><path d="M7 0 V36 H16 M7 12 H16" stroke="#bbb" stroke-width="1.2" fill="none"/></svg>
<svg class="a" style="left:115px;top:591px" width="20" height="18"><rect x="2" y="2" width="16" height="14" fill="#e8f0e8" stroke="#2a6a4a" stroke-width="1.6"/><path d="M8 3v12M12 6h5M12 9h5M12 12h5" stroke="#2a6a4a" stroke-width="1.2"/></svg>
<div class="a" style="left:139px;top:590px;font-size:15px;line-height:18px"><span class="c">输出</span>Excel1</div>
<div class="a" style="left:139px;top:613px;font-size:15px;line-height:18px;color:#fff"><span class="c">输出视图</span>1</div>
<svg class="a" style="left:120px;top:616px" width="14" height="14"><path d="M2 11h10M4 7v4M8 7v4" stroke="#6aa8e8" stroke-width="1"/></svg>

<!-- separator -->
<div class="a" style="left:4px;top:639px;width:364px;height:3px;background:#2e3236"></div>
<div class="a" style="left:4px;top:709px;width:364px;height:1px;background:#c8c8c8"></div>
<div class="tab sel" style="left:5px;top:710px;width:65px;height:25px"><span class="c">测量程序</span></div>
<div class="tab" style="left:71px;top:712px;width:64px;height:23px"><span class="c">测量视图</span></div>
<div class="a" style="left:4px;top:735px;width:364px;height:2px;background:#5c636c"></div>
<div class="hdr" style="left:1px;top:737px;width:367px;height:19px;line-height:19px;background:linear-gradient(#d0d8e0,#dde2e7)"><span class="c">光源控制</span></div>
<div class="flt" style="left:349px;top:742px"></div>
<div class="a" style="left:4px;top:756px;width:257px;height:198px;background:#000"></div>
<!-- light icons -->
<svg class="a" style="left:0;top:750px" width="368" height="240">
 <g transform="translate(279,24)"><circle r="11" fill="none" stroke="#e8f020" stroke-width="5" stroke-dasharray="4 2.5"/><circle r="11" fill="none" stroke="#4aa" stroke-width="1" stroke-dasharray="1 6"/></g>
 <circle cx="279" cy="54" r="11" fill="#fff" stroke="#4a9ae0" stroke-width="2"/><circle cx="279" cy="54" r="8" fill="#f5e800"/>
 <circle cx="279" cy="85" r="6" fill="#f5e800"/>
 <text x="304" y="18" font-family="Liberation Serif" font-weight="bold" font-size="14">24</text>
 <text x="338" y="18" font-family="Liberation Serif" font-weight="bold" font-size="14">0</text>
 <rect x="310" y="25" width="4" height="150" fill="#dcdcdc"/><rect x="345" y="25" width="4" height="160" fill="#dcdcdc"/>
 <rect x="303" y="150" width="21" height="10" fill="#1a72c8"/>
 <rect x="338" y="163" width="21" height="10" fill="#1a72c8"/>
 <rect x="266" y="176" width="26" height="26" fill="#fbf0a0"/>
 <circle cx="278" cy="188" r="12" fill="#2e9e5e"/><text x="271" y="194" font-size="14" font-weight="bold" fill="#fff">A</text>
 <circle cx="317" cy="185" r="7" fill="#20a860"/><rect x="314" y="190" width="6" height="9" fill="#20a860"/>
 <rect x="340" y="177" width="26" height="25" fill="#999"/><rect x="343" y="180" width="20" height="19" fill="#2dbb6a"/><rect x="348" y="186" width="9" height="6" fill="#c8f0d0"/>
 <rect x="278" y="207" width="26" height="26" rx="2" fill="#d8101a"/><path d="M283 220 L289 227 L300 212" fill="none" stroke="#1ec050" stroke-width="4"/>
 <rect x="325" y="207" width="25" height="25" rx="3" fill="#d8101a"/><text x="327" y="224" font-family="Liberation Serif" font-weight="bold" font-size="10" fill="#fff">OFF</text>
</svg>
<svg class="a" style="left:0;top:955px" width="130" height="30">
 <rect x="4" y="1" width="28" height="27" fill="#fbeaa0"/>
 <circle cx="20" cy="14.5" r="10.5" fill="#fbe89a" stroke="#111" stroke-width="2"/>
 <g fill="none" stroke="#111" stroke-width="1.3">
  <circle cx="46" cy="14.5" r="10.5"/><circle cx="46" cy="14.5" r="5.5"/><path d="M35.5 14.5h5M51.5 14.5h5M46 4v5M46 20v5M38.6 7.1l3.5 3.5M53.4 7.1l-3.5 3.5M38.6 21.9l3.5-3.5M53.4 21.9l-3.5-3.5"/>
  <circle cx="73" cy="14.5" r="10.5"/><circle cx="73" cy="14.5" r="5.5"/><path d="M62.5 14.5h5M78.5 14.5h5M73 4v5M73 20v5"/>
  <circle cx="100" cy="14.5" r="10.5"/><circle cx="100" cy="14.5" r="8.5"/><circle cx="100" cy="14.5" r="6"/><path d="M89.5 14.5h5M105.5 14.5h5M100 4v5M100 20v5"/>
 </g>
</svg>
<div class="a" style="left:4px;top:985px;width:364px;height:1px;background:#c8c8c8"></div>
<div class="tab sel" style="left:5px;top:985px;width:65px;height:26px"><span class="c">光源控制</span></div>
<div class="tab" style="left:71px;top:987px;width:64px;height:24px"><span class="c">运动控制</span></div>
<div class="a" style="left:3px;top:167px;width:1px;height:844px;background:#dde"></div>


<!-- CENTER IMAGE VIEW -->
<div class="a" style="left:371px;top:167px;width:763px;height:26px;background:linear-gradient(#eef3f8,#f4f6f8)"></div>
<div class="tab sel" style="left:372px;top:168px;width:64px;height:25px;line-height:23px"><span class="c">影像窗口</span></div>
<div class="tab" style="left:437px;top:169px;width:66px;height:24px;line-height:22px"><span class="c">复测窗口</span></div>
<div class="a" style="left:371px;top:192px;width:763px;height:1px;background:#666"></div>
<div class="a" style="left:371px;top:193px;width:763px;height:818px;background:#4b4b50"></div>
<div class="a" style="left:397px;top:193px;width:737px;height:20px;background:#fff"></div>
<div class="a" style="left:397px;top:193px;width:713px;height:814px;background:#fff;border-bottom-left-radius:3px"></div>
<svg class="a" style="left:371px;top:193px" width="763" height="818">
 <g transform="translate(-371,-193)">
 <!-- crosshair -->
 <line x1="753.5" y1="193" x2="753.5" y2="1007" stroke="#e01818" stroke-width="1"/>
 <line x1="375" y1="600.5" x2="1134" y2="600.5" stroke="#e01818" stroke-width="1"/>
 <!-- black part -->
 <path fill="#0a0a0a" fill-rule="evenodd" d="
  M625 398 L806 397 Q830 402 860 402 Q885 401 900 397 C965 397 1008 440 1008 492
  L1010 697 C1010 770 965 811 900 811 L640 812 C560 812 515 760 515 700 L515 520 C515 455 555 398 625 398 Z
  M580 472 L822 472 L822 427 L830 427 L830 419 L875 419 L875 427 L884 427 L884 512 Q884 533 905 533 L950 533
  L950 710 L630 711 L630 665 Q630 643 608 643 L578 643 L578 584 L574 584 L574 478 Q574 472 580 472 Z"/>
 <!-- cutouts -->
 <path fill="#fff" d="M642 447 H657 V440 H695 V447 H708 V464 H642 Z"/>
 <circle cx="723" cy="432" r="5" fill="#fff"/>
 <rect x="901" y="489" width="30" height="30" rx="8" fill="#fff"/>
 <ellipse cx="601" cy="675" rx="15" ry="19" fill="#fff"/>
 <rect x="764" y="727" width="25" height="44" fill="#fff"/><rect x="764" y="733" width="5" height="30" fill="#0a0a0a"/>
 <circle cx="775.5" cy="779" r="5" fill="#fff"/>
 <rect x="813" y="771" width="15" height="19" rx="2" fill="#fff"/>
 <rect x="908" y="777" width="10" height="10" rx="2" fill="#fff"/>
 <!-- green measurement rects -->
 <g fill="none" stroke="#35d84a" stroke-width="1" stroke-dasharray="3 2">
  <path d="M512 354 L1006 349 L1008 470 M512 354 L512 813"/>
  <path d="M441 400 L806 398 M441 400 L443 815 L950 813"/>
  <path d="M824 470 L1086 470 L1086 706 L944 706"/>
  <path d="M578 640 L578 880 L952 879 L952 706"/>
 </g>
 <g stroke="#30e040" stroke-width="1.3" fill="none">
  <path d="M515.5 470 L515.5 715 M1009 492 L1010 697 M609 398 L806 397 M580 812 L816 811"/>
 </g>
 <g font-family="Liberation Sans" font-size="16" fill="#3ad54a">
  <text x="808" y="352">XY=43.0940mm</text>
  <text x="442" y="722">XY=36.1597mm</text>
  <text x="1085" y="629">XY=20</text>
  <text x="866" y="878">XY=32.5000mm</text>
 </g>
 <g fill="#e02030" font-family="Liberation Sans" font-size="14">
  <text x="752" y="487">Y</text>
  <text x="891" y="600">X</text>
  <path d="M843 592 L865 600 L843 608" fill="none" stroke="#e02030" stroke-width="1.3"/>
 </g>
 </g>
</svg>
<div class="a" style="left:377px;top:199px;font-size:16px;line-height:19.5px;color:#2222a8;white-space:pre">L 1---M:2.91<br>X=0.044003mm<br>Y=0.044003mm</div>
<div class="a" style="left:985px;top:193px;width:79px;height:20px;background:#e4e4e4;border:1px solid #aaa;font-size:14px;line-height:18px;padding-left:4px"><span class="c">影像</span>1</div>
<svg class="a" style="left:1045px;top:199px" width="12" height="8"><path d="M1 1 L6 6 L11 1" fill="none" stroke="#555" stroke-width="1"/></svg>
<svg class="a" style="left:1064px;top:192px" width="70" height="22">
 <rect x="4" y="3" width="17" height="17" fill="#eafaf4" stroke="#7fd8b0" stroke-width="2"/>
 <rect x="26" y="3" width="18" height="17" fill="#eaf4f8" stroke="#6a9a90" stroke-width="2"/><path d="M31 8v8M35 8v8M39 8v8" stroke="#6aaae8" stroke-width="1.5"/>
 <path d="M53 10 V8 a5 5 0 0 1 10 0" fill="none" stroke="#2a9a60" stroke-width="2.5"/><rect x="51" y="10" width="13" height="10" fill="#2aa868"/>
</svg>

<!-- RIGHT PANEL -->
<div class="a" style="left:1137px;top:167px;width:782px;height:844px;background:#f3f3f3"></div>
<div class="hdr" style="left:1137px;top:167px;width:782px;height:19px;line-height:18px;background:linear-gradient(#cfd7df 0%,#dde1e6 80%,#eef0f2 100%)"><span class="c">输出视图</span></div>
<div class="flt" style="left:1897px;top:171px"></div>
<div class="a" style="left:1138px;top:186px;width:765px;height:25px;background:#d6dce3;overflow:hidden">
<div class="a" style="left:0px;top:0;width:37px;height:25px;border-top:2px solid #111;border-left:2px solid #111;border-bottom:2px solid #777;text-align:center;font-size:15px;line-height:23px">1</div>
<div class="a" style="left:38px;top:0;width:85px;height:25px;border-top:2px solid #111;border-left:2px solid #111;border-bottom:2px solid #777;text-align:center;font-size:15px;line-height:23px">2</div>
<div class="a" style="left:124px;top:0;width:85px;height:25px;border-top:2px solid #111;border-left:2px solid #111;border-bottom:2px solid #777;text-align:center;font-size:15px;line-height:23px">3</div>
<div class="a" style="left:210px;top:0;width:85px;height:25px;border-top:2px solid #111;border-left:2px solid #111;border-bottom:2px solid #777;text-align:center;font-size:15px;line-height:23px">4</div>
<div class="a" style="left:296px;top:0;width:85px;height:25px;border-top:2px solid #111;border-left:2px solid #111;border-bottom:2px solid #777;text-align:center;font-size:15px;line-height:23px">5</div>
<div class="a" style="left:382px;top:0;width:85px;height:25px;border-top:2px solid #111;border-left:2px solid #111;border-bottom:2px solid #777;text-align:center;font-size:15px;line-height:23px">6</div>
<div class="a" style="left:468px;top:0;width:85px;height:25px;border-top:2px solid #111;border-left:2px solid #111;border-bottom:2px solid #777;text-align:center;font-size:15px;line-height:23px">7</div>
<div class="a" style="left:554px;top:0;width:85px;height:25px;border-top:2px solid #111;border-left:2px solid #111;border-bottom:2px solid #777;text-align:center;font-size:15px;line-height:23px">8</div>
<div class="a" style="left:640px;top:0;width:85px;height:25px;border-top:2px solid #111;border-left:2px solid #111;border-bottom:2px solid #777;text-align:center;font-size:15px;line-height:23px">9</div>
<div class="a" style="left:726px;top:0;width:85px;height:25px;border-top:2px solid #111;border-left:2px solid #111;border-bottom:2px solid #777;text-align:center;font-size:15px;line-height:23px">10</div>
</div>
<div class="a" style="left:1138px;top:211px;width:765px;height:524px;overflow:hidden">
<div class="a" style="left:0;top:29px;width:765px;height:3px;border-top:1px solid #dadada;border-bottom:1px solid #e2e2e2;background:#fafafa"></div>
<div class="a" style="left:0;top:59px;width:765px;height:3px;border-top:1px solid #dadada;border-bottom:1px solid #e2e2e2;background:#fafafa"></div>
<div class="a" style="left:0;top:89px;width:765px;height:3px;border-top:1px solid #dadada;border-bottom:1px solid #e2e2e2;background:#fafafa"></div>
<div class="a" style="left:0;top:119px;width:765px;height:3px;border-top:1px solid #dadada;border-bottom:1px solid #e2e2e2;background:#fafafa"></div>
<div class="a" style="left:0;top:149px;width:765px;height:3px;border-top:1px solid #dadada;border-bottom:1px solid #e2e2e2;background:#fafafa"></div>
<div class="a" style="left:0;top:179px;width:765px;height:3px;border-top:1px solid #dadada;border-bottom:1px solid #e2e2e2;background:#fafafa"></div>
<div class="a" style="left:0;top:209px;width:765px;height:3px;border-top:1px solid #dadada;border-bottom:1px solid #e2e2e2;background:#fafafa"></div>
<div class="a" style="left:0;top:239px;width:765px;height:3px;border-top:1px solid #dadada;border-bottom:1px solid #e2e2e2;background:#fafafa"></div>
<div class="a" style="left:0;top:269px;width:765px;height:3px;border-top:1px solid #dadada;border-bottom:1px solid #e2e2e2;background:#fafafa"></div>
<div class="a" style="left:0;top:299px;width:765px;height:3px;border-top:1px solid #dadada;border-bottom:1px solid #e2e2e2;background:#fafafa"></div>
<div class="a" style="left:0;top:329px;width:765px;height:3px;border-top:1px solid #dadada;border-bottom:1px solid #e2e2e2;background:#fafafa"></div>
<div class="a" style="left:0;top:359px;width:765px;height:3px;border-top:1px solid #dadada;border-bottom:1px solid #e2e2e2;background:#fafafa"></div>
<div class="a" style="left:0;top:389px;width:765px;height:3px;border-top:1px solid #dadada;border-bottom:1px solid #e2e2e2;background:#fafafa"></div>
<div class="a" style="left:0;top:419px;width:765px;height:3px;border-top:1px solid #dadada;border-bottom:1px solid #e2e2e2;background:#fafafa"></div>
<div class="a" style="left:0;top:449px;width:765px;height:3px;border-top:1px solid #dadada;border-bottom:1px solid #e2e2e2;background:#fafafa"></div>
<div class="a" style="left:0;top:479px;width:765px;height:3px;border-top:1px solid #dadada;border-bottom:1px solid #e2e2e2;background:#fafafa"></div>
<div class="a" style="left:0;top:509px;width:765px;height:3px;border-top:1px solid #dadada;border-bottom:1px solid #e2e2e2;background:#fafafa"></div>
<div class="a" style="left:0;top:539px;width:765px;height:3px;border-top:1px solid #dadada;border-bottom:1px solid #e2e2e2;background:#fafafa"></div>
<div class="a" style="left:37px;top:0;width:2px;height:524px;background:#111"></div>
<div class="a" style="left:123px;top:0;width:2px;height:524px;background:#111"></div>
<div class="a" style="left:209px;top:0;width:2px;height:524px;background:#111"></div>
<div class="a" style="left:295px;top:0;width:2px;height:524px;background:#111"></div>
<div class="a" style="left:381px;top:0;width:2px;height:524px;background:#111"></div>
<div class="a" style="left:467px;top:0;width:2px;height:524px;background:#111"></div>
<div class="a" style="left:553px;top:0;width:2px;height:524px;background:#111"></div>
<div class="a" style="left:639px;top:0;width:2px;height:524px;background:#111"></div>
<div class="a" style="left:725px;top:0;width:2px;height:524px;background:#111"></div>
<div class="a" style="left:811px;top:0;width:2px;height:524px;background:#111"></div>
<div class="a" style="left:42px;top:36px;font-size:16px;line-height:18px;letter-spacing:0.3px;white-space:nowrap"><span class="c">序号</span></div>
<div class="a" style="left:128px;top:36px;font-size:16px;line-height:18px;letter-spacing:0.3px;white-space:nowrap">1</div>
<div class="a" style="left:214px;top:36px;font-size:16px;line-height:18px;letter-spacing:0.3px;white-space:nowrap">2</div>
<div class="a" style="left:300px;top:36px;font-size:16px;line-height:18px;letter-spacing:0.3px;white-space:nowrap">3</div>
<div class="a" style="left:386px;top:36px;font-size:16px;line-height:18px;letter-spacing:0.3px;white-space:nowrap">4</div>
<div class="a" style="left:472px;top:36px;font-size:16px;line-height:18px;letter-spacing:0.3px;white-space:nowrap">5</div>
<div class="a" style="left:558px;top:36px;font-size:16px;line-height:18px;letter-spacing:0.3px;white-space:nowrap">6</div>
<div class="a" style="left:644px;top:36px;font-size:16px;line-height:18px;letter-spacing:0.3px;white-space:nowrap">7</div>
<div class="a" style="left:730px;top:36px;font-size:16px;line-height:18px;letter-spacing:0.3px;white-space:nowrap">8</div>
<div class="a" style="left:42px;top:66px;font-size:16px;line-height:18px;letter-spacing:0.3px;white-space:nowrap"><span class="c">元素</span></div>
<div class="a" style="left:128px;top:66px;font-size:16px;line-height:18px;letter-spacing:0.3px;white-space:nowrap">Dism2</div>
<div class="a" style="left:386px;top:66px;font-size:16px;line-height:18px;letter-spacing:0.3px;white-space:nowrap">Dism3</div>
<div class="a" style="left:644px;top:66px;font-size:16px;line-height:18px;letter-spacing:0.3px;white-space:nowrap">Dism4</div>
<div class="a" style="left:42px;top:96px;font-size:16px;line-height:18px;letter-spacing:0.3px;white-space:nowrap"><span class="c">内容</span></div>
<div class="a" style="left:128px;top:96px;font-size:16px;line-height:18px;letter-spacing:0.3px;white-space:nowrap"><span class="c">距离</span></div>
<div class="a" style="left:386px;top:96px;font-size:16px;line-height:18px;letter-spacing:0.3px;white-space:nowrap"><span class="c">距离</span></div>
<div class="a" style="left:644px;top:96px;font-size:16px;line-height:18px;letter-spacing:0.3px;white-space:nowrap"><span class="c">距离</span></div>
<div class="a" style="left:42px;top:126px;font-size:16px;line-height:18px;letter-spacing:0.3px;white-space:nowrap"><span class="c">标准值</span></div>
<div class="a" style="left:128px;top:126px;font-size:16px;line-height:18px;letter-spacing:0.3px;white-space:nowrap">43.0938</div>
<div class="a" style="left:386px;top:126px;font-size:16px;line-height:18px;letter-spacing:0.3px;white-space:nowrap">36.1585</div>
<div class="a" style="left:644px;top:126px;font-size:16px;line-height:18px;letter-spacing:0.3px;white-space:nowrap">20.6061</div>
<div class="a" style="left:42px;top:156px;font-size:16px;line-height:18px;letter-spacing:0.3px;white-space:nowrap"><span class="c">上公差</span></div>
<div class="a" style="left:128px;top:156px;font-size:16px;line-height:18px;letter-spacing:0.3px;white-space:nowrap">0.0100</div>
<div class="a" style="left:386px;top:156px;font-size:16px;line-height:18px;letter-spacing:0.3px;white-space:nowrap">0.0100</div>
<div class="a" style="left:644px;top:156px;font-size:16px;line-height:18px;letter-spacing:0.3px;white-space:nowrap">0.0100</div>
<div class="a" style="left:42px;top:186px;font-size:16px;line-height:18px;letter-spacing:0.3px;white-space:nowrap"><span class="c">下公差</span></div>
<div class="a" style="left:128px;top:186px;font-size:16px;line-height:18px;letter-spacing:0.3px;white-space:nowrap">-0.0100</div>
<div class="a" style="left:386px;top:186px;font-size:16px;line-height:18px;letter-spacing:0.3px;white-space:nowrap">-0.0100</div>
<div class="a" style="left:644px;top:186px;font-size:16px;line-height:18px;letter-spacing:0.3px;white-space:nowrap">-0.0100</div>
<div class="a" style="left:128px;top:216px;font-size:16px;line-height:18px;letter-spacing:0.3px;white-space:nowrap"><span class="c">测量值</span></div>
<div class="a" style="left:214px;top:216px;font-size:16px;line-height:18px;letter-spacing:0.3px;white-space:nowrap"><span class="c">超差值</span></div>
<div class="a" style="left:300px;top:216px;font-size:16px;line-height:18px;letter-spacing:0.3px;white-space:nowrap"><span class="c">状态</span></div>
<div class="a" style="left:386px;top:216px;font-size:16px;line-height:18px;letter-spacing:0.3px;white-space:nowrap"><span class="c">测量值</span></div>
<div class="a" style="left:472px;top:216px;font-size:16px;line-height:18px;letter-spacing:0.3px;white-space:nowrap"><span class="c">超差值</span></div>
<div class="a" style="left:558px;top:216px;font-size:16px;line-height:18px;letter-spacing:0.3px;white-space:nowrap"><span class="c">状态</span></div>
<div class="a" style="left:644px;top:216px;font-size:16px;line-height:18px;letter-spacing:0.3px;white-space:nowrap"><span class="c">测量值</span></div>
<div class="a" style="left:730px;top:216px;font-size:16px;line-height:18px;letter-spacing:0.3px;white-space:nowrap"><span class="c">超差值</span></div>
<div class="a" style="left:4px;top:246px;font-size:16px;line-height:18px;letter-spacing:0.3px;white-space:nowrap">1</div>
<div class="a" style="left:42px;top:246px;font-size:16px;line-height:18px;letter-spacing:0.3px;white-space:nowrap">OK</div>
<div class="a" style="left:128px;top:246px;font-size:16px;line-height:18px;letter-spacing:0.3px;white-space:nowrap">43.0943</div>
<div class="a" style="left:214px;top:246px;font-size:16px;line-height:18px;letter-spacing:0.3px;white-space:nowrap">0.0000</div>
<div class="a" style="left:300px;top:246px;font-size:16px;line-height:18px;letter-spacing:0.3px;white-space:nowrap">OK</div>
<div class="a" style="left:386px;top:246px;font-size:16px;line-height:18px;letter-spacing:0.3px;white-space:nowrap">36.1603</div>
<div class="a" style="left:472px;top:246px;font-size:16px;line-height:18px;letter-spacing:0.3px;white-space:nowrap">0.0000</div>
<div class="a" style="left:558px;top:246px;font-size:16px;line-height:18px;letter-spacing:0.3px;white-space:nowrap">OK</div>
<div class="a" style="left:644px;top:246px;font-size:16px;line-height:18px;letter-spacing:0.3px;white-space:nowrap">20.6064</div>
<div class="a" style="left:730px;top:246px;font-size:16px;line-height:18px;letter-spacing:0.3px;white-space:nowrap">0.0000</div>
<div class="a" style="left:4px;top:276px;font-size:16px;line-height:18px;letter-spacing:0.3px;white-space:nowrap">2</div>
<div class="a" style="left:42px;top:276px;font-size:16px;line-height:18px;letter-spacing:0.3px;white-space:nowrap">OK</div>
<div class="a" style="left:128px;top:276px;font-size:16px;line-height:18px;letter-spacing:0.3px;white-space:nowrap">43.0948</div>
<div class="a" style="left:214px;top:276px;font-size:16px;line-height:18px;letter-spacing:0.3px;white-space:nowrap">0.0000</div>
<div class="a" style="left:300px;top:276px;font-size:16px;line-height:18px;letter-spacing:0.3px;white-space:nowrap">OK</div>
<div class="a" style="left:386px;top:276px;font-size:16px;line-height:18px;letter-spacing:0.3px;white-space:nowrap">36.1574</div>
<div class="a" style="left:472px;top:276px;font-size:16px;line-height:18px;letter-spacing:0.3px;white-space:nowrap">0.0000</div>
<div class="a" style="left:558px;top:276px;font-size:16px;line-height:18px;letter-spacing:0.3px;white-space:nowrap">OK</div>
<div class="a" style="left:644px;top:276px;font-size:16px;line-height:18px;letter-spacing:0.3px;white-space:nowrap">20.6061</div>
<div class="a" style="left:730px;top:276px;font-size:16px;line-height:18px;letter-spacing:0.3px;white-space:nowrap">0.0000</div>
<div class="a" style="left:4px;top:306px;font-size:16px;line-height:18px;letter-spacing:0.3px;white-space:nowrap">3</div>
<div class="a" style="left:42px;top:306px;font-size:16px;line-height:18px;letter-spacing:0.3px;white-space:nowrap">OK</div>
<div class="a" style="left:128px;top:306px;font-size:16px;line-height:18px;letter-spacing:0.3px;white-space:nowrap">43.0938</div>
<div class="a" style="left:214px;top:306px;font-size:16px;line-height:18px;letter-spacing:0.3px;white-space:nowrap">0.0000</div>
<div class="a" style="left:300px;top:306px;font-size:16px;line-height:18px;letter-spacing:0.3px;white-space:nowrap">OK</div>
<div class="a" style="left:386px;top:306px;font-size:16px;line-height:18px;letter-spacing:0.3px;white-space:nowrap">36.1587</div>
<div class="a" style="left:472px;top:306px;font-size:16px;line-height:18px;letter-spacing:0.3px;white-space:nowrap">0.0000</div>
<div class="a" style="left:558px;top:306px;font-size:16px;line-height:18px;letter-spacing:0.3px;white-space:nowrap">OK</div>
<div class="a" style="left:644px;top:306px;font-size:16px;line-height:18px;letter-spacing:0.3px;white-space:nowrap">20.6056</div>
<div class="a" style="left:730px;top:306px;font-size:16px;line-height:18px;letter-spacing:0.3px;white-space:nowrap">0.0000</div>
<div class="a" style="left:4px;top:336px;font-size:16px;line-height:18px;letter-spacing:0.3px;white-space:nowrap">4</div>
<div class="a" style="left:42px;top:336px;font-size:16px;line-height:18px;letter-spacing:0.3px;white-space:nowrap">OK</div>
<div class="a" style="left:128px;top:336px;font-size:16px;line-height:18px;letter-spacing:0.3px;white-space:nowrap">43.0941</div>
<div class="a" style="left:214px;top:336px;font-size:16px;line-height:18px;letter-spacing:0.3px;white-space:nowrap">0.0000</div>
<div class="a" style="left:300px;top:336px;font-size:16px;line-height:18px;letter-spacing:0.3px;white-space:nowrap">OK</div>
<div class="a" style="left:386px;top:336px;font-size:16px;line-height:18px;letter-spacing:0.3px;white-space:nowrap">36.1571</div>
<div class="a" style="left:472px;top:336px;font-size:16px;line-height:18px;letter-spacing:0.3px;white-space:nowrap">0.0000</div>
<div class="a" style="left:558px;top:336px;font-size:16px;line-height:18px;letter-spacing:0.3px;white-space:nowrap">OK</div>
<div class="a" style="left:644px;top:336px;font-size:16px;line-height:18px;letter-spacing:0.3px;white-space:nowrap">20.6064</div>
<div class="a" style="left:730px;top:336px;font-size:16px;line-height:18px;letter-spacing:0.3px;white-space:nowrap">0.0000</div>
<div class="a" style="left:4px;top:366px;font-size:16px;line-height:18px;letter-spacing:0.3px;white-space:nowrap">5</div>
<div class="a" style="left:42px;top:366px;font-size:16px;line-height:18px;letter-spacing:0.3px;white-space:nowrap">OK</div>
<div class="a" style="left:128px;top:366px;font-size:16px;line-height:18px;letter-spacing:0.3px;white-space:nowrap">43.0936</div>
<div class="a" style="left:214px;top:366px;font-size:16px;line-height:18px;letter-spacing:0.3px;white-space:nowrap">0.0000</div>
<div class="a" style="left:300px;top:366px;font-size:16px;line-height:18px;letter-spacing:0.3px;white-space:nowrap">OK</div>
<div class="a" style="left:386px;top:366px;font-size:16px;line-height:18px;letter-spacing:0.3px;white-space:nowrap">36.1562</div>
<div class="a" style="left:472px;top:366px;font-size:16px;line-height:18px;letter-spacing:0.3px;white-space:nowrap">0.0000</div>
<div class="a" style="left:558px;top:366px;font-size:16px;line-height:18px;letter-spacing:0.3px;white-space:nowrap">OK</div>
<div class="a" style="left:644px;top:366px;font-size:16px;line-height:18px;letter-spacing:0.3px;white-space:nowrap">20.6060</div>
<div class="a" style="left:730px;top:366px;font-size:16px;line-height:18px;letter-spacing:0.3px;white-space:nowrap">0.0000</div>
<div class="a" style="left:4px;top:396px;font-size:16px;line-height:18px;letter-spacing:0.3px;white-space:nowrap">6</div>
<div class="a" style="left:42px;top:396px;font-size:16px;line-height:18px;letter-spacing:0.3px;white-space:nowrap">OK</div>
<div class="a" style="left:128px;top:396px;font-size:16px;line-height:18px;letter-spacing:0.3px;white-space:nowrap">43.0949</div>
<div class="a" style="left:214px;top:396px;font-size:16px;line-height:18px;letter-spacing:0.3px;white-space:nowrap">0.0000</div>
<div class="a" style="left:300px;top:396px;font-size:16px;line-height:18px;letter-spacing:0.3px;white-space:nowrap">OK</div>
<div class="a" style="left:386px;top:396px;font-size:16px;line-height:18px;letter-spacing:0.3px;white-space:nowrap">36.1581</div>
<div class="a" style="left:472px;top:396px;font-size:16px;line-height:18px;letter-spacing:0.3px;white-space:nowrap">0.0000</div>
<div class="a" style="left:558px;top:396px;font-size:16px;line-height:18px;letter-spacing:0.3px;white-space:nowrap">OK</div>
<div class="a" style="left:644px;top:396px;font-size:16px;line-height:18px;letter-spacing:0.3px;white-space:nowrap">20.6057</div>
<div class="a" style="left:730px;top:396px;font-size:16px;line-height:18px;letter-spacing:0.3px;white-space:nowrap">0.0000</div>
<div class="a" style="left:4px;top:426px;font-size:16px;line-height:18px;letter-spacing:0.3px;white-space:nowrap">7</div>
<div class="a" style="left:42px;top:426px;font-size:16px;line-height:18px;letter-spacing:0.3px;white-space:nowrap">OK</div>
<div class="a" style="left:128px;top:426px;font-size:16px;line-height:18px;letter-spacing:0.3px;white-space:nowrap">43.0940</div>
<div class="a" style="left:214px;top:426px;font-size:16px;line-height:18px;letter-spacing:0.3px;white-space:nowrap">0.0000</div>
<div class="a" style="left:300px;top:426px;font-size:16px;line-height:18px;letter-spacing:0.3px;white-space:nowrap">OK</div>
<div class="a" style="left:386px;top:426px;font-size:16px;line-height:18px;letter-spacing:0.3px;white-space:nowrap">36.1597</div>
<div class="a" style="left:472px;top:426px;font-size:16px;line-height:18px;letter-spacing:0.3px;white-space:nowrap">0.0000</div>
<div class="a" style="left:558px;top:426px;font-size:16px;line-height:18px;letter-spacing:0.3px;white-space:nowrap">OK</div>
<div class="a" style="left:644px;top:426px;font-size:16px;line-height:18px;letter-spacing:0.3px;white-space:nowrap">20.6060</div>
<div class="a" style="left:730px;top:426px;font-size:16px;line-height:18px;letter-spacing:0.3px;white-space:nowrap">0.0000</div>
</div>
<div class="a" style="left:1903px;top:186px;width:14px;height:550px;background:#e6e6e6"></div>
<div class="a" style="left:1905px;top:201px;width:10px;height:352px;background:#b4b4b4;border:1px solid #333;border-radius:3px"></div>
<div class="a" style="left:1905px;top:553px;width:10px;height:182px;background:#d4d4d4"></div>
<div class="a" style="left:1138px;top:735px;width:765px;height:12px;background:#dedede"></div>
<div class="a" style="left:1153px;top:736px;width:154px;height:10px;background:#b0b0b0;border:1px solid #444;border-radius:4px"></div>
<div class="tab" style="left:1138px;top:749px;width:48px;height:24px;line-height:22px;font-size:14px;padding:0 1px">3D<span class="c">视图</span></div>
<div class="tab" style="left:1187px;top:749px;width:66px;height:24px;line-height:22px;font-size:14px;padding:0 1px"><span class="c">导航视图</span></div>
<div class="tab" style="left:1254px;top:749px;width:66px;height:24px;line-height:22px;font-size:14px;padding:0 1px"><span class="c">拼拍地图</span></div>
<div class="tab" style="left:1321px;top:749px;width:88px;height:24px;line-height:22px;font-size:14px;padding:0 1px">CAD<span class="c">模型窗口</span></div>
<div class="tab sel" style="left:1410px;top:749px;width:66px;height:24px;line-height:22px;font-size:14px;padding:0 1px"><span class="c">输出视图</span></div>
<div class="tab" style="left:1477px;top:749px;width:96px;height:24px;line-height:22px;font-size:14px;padding:0 1px"><span class="c">工件结果视图</span></div>
<div class="a" style="left:1137px;top:773px;width:782px;height:2px;background:#5c636c"></div>
<div class="hdr" style="left:1137px;top:775px;width:782px;height:20px;line-height:20px;background:linear-gradient(#d0d8e0 0%,#dde2e7 80%,#eef0f2 100%)"><span class="c">元素信息</span></div>
<div class="flt" style="left:1897px;top:779px"></div>
<div class="a " style="left:1147px;top:803px;font-size:14px;line-height:20px"><span class="c">名称</span></div>
<div class="a" style="left:1183px;top:803px;width:138px;height:20px;background:#f8f8f8;border:1px solid #888;border-radius:3px"></div>
<div class="a serif" style="left:1329px;top:803px;font-size:14px;line-height:20px">ID</div>
<div class="a" style="left:1350px;top:803px;width:138px;height:20px;background:#f8f8f8;border:1px solid #888;border-radius:3px"></div>
<div class="a " style="left:1495px;top:803px;font-size:14px;line-height:20px"><span class="c">类型</span></div>
<div class="a" style="left:1532px;top:803px;width:138px;height:20px;background:#f8f8f8;border:1px solid #888;border-radius:3px"></div>
<div class="a " style="left:1683px;top:803px;font-size:14px;line-height:20px"><span class="c">参考坐标系</span></div>
<div class="a" style="left:1760px;top:803px;width:138px;height:20px;background:#f8f8f8;border:1px solid #888;border-radius:3px"></div>
<div class="a" style="left:1146px;top:831px;width:759px;height:26px;background:#e0e2e6"></div>
<div class="a" style="left:1147px;top:831px;width:49px;height:26px;background:#d3d9e0;border-top:2px solid #111;border-left:2px solid #111;border-bottom:2px solid #777;border-right:1px solid #aaa;text-align:center;font-size:14px;line-height:22px"><span class="c">项目</span></div>
<div class="a" style="left:1197px;top:831px;width:84px;height:26px;background:#d3d9e0;border-top:2px solid #111;border-left:2px solid #111;border-bottom:2px solid #777;border-right:1px solid #aaa;text-align:center;font-size:14px;line-height:22px"><span class="c">尺寸号</span></div>
<div class="a" style="left:1282px;top:831px;width:84px;height:26px;background:#d3d9e0;border-top:2px solid #111;border-left:2px solid #111;border-bottom:2px solid #777;border-right:1px solid #aaa;text-align:center;font-size:14px;line-height:22px"><span class="c">测量值</span></div>
<div class="a" style="left:1367px;top:831px;width:84px;height:26px;background:#d3d9e0;border-top:2px solid #111;border-left:2px solid #111;border-bottom:2px solid #777;border-right:1px solid #aaa;text-align:center;font-size:14px;line-height:22px"><span class="c">标准值</span></div>
<div class="a" style="left:1452px;top:831px;width:84px;height:26px;background:#d3d9e0;border-top:2px solid #111;border-left:2px solid #111;border-bottom:2px solid #777;border-right:1px solid #aaa;text-align:center;font-size:14px;line-height:22px"><span class="c">偏差</span></div>
<div class="a" style="left:1537px;top:831px;width:84px;height:26px;background:#d3d9e0;border-top:2px solid #111;border-left:2px solid #111;border-bottom:2px solid #777;border-right:1px solid #aaa;text-align:center;font-size:14px;line-height:22px"><span class="c">上公差</span></div>
<div class="a" style="left:1622px;top:831px;width:84px;height:26px;background:#d3d9e0;border-top:2px solid #111;border-left:2px solid #111;border-bottom:2px solid #777;border-right:1px solid #aaa;text-align:center;font-size:14px;line-height:22px"><span class="c">下公差</span></div>
<div class="a" style="left:1707px;top:831px;width:84px;height:26px;background:#d3d9e0;border-top:2px solid #111;border-left:2px solid #111;border-bottom:2px solid #777;border-right:1px solid #aaa;text-align:center;font-size:14px;line-height:22px"><span class="c">超差值</span></div>
<div class="a" style="left:1792px;top:831px;width:48px;height:26px;background:#d3d9e0;border-top:2px solid #111;border-left:2px solid #111;border-bottom:2px solid #777;border-right:1px solid #aaa;text-align:center;font-size:14px;line-height:22px"><span class="c">状态</span></div>
<div class="a" style="left:1137px;top:985px;width:782px;height:1px;background:#c8c8c8"></div>
<div class="tab sel" style="left:1138px;top:985px;width:64px;height:26px;line-height:22px"><span class="c">元素信息</span></div>
<div class="tab" style="left:1203px;top:987px;width:65px;height:24px;line-height:22px"><span class="c">系统消息</span></div>
<div class="tab" style="left:1269px;top:987px;width:65px;height:24px;line-height:22px"><span class="c">测量结果</span></div>
<div class="a" style="left:1915px;top:167px;width:4px;height:844px;background:#e8e8ea;border-left:1px solid #bbb"></div>
<!-- status bar -->
<div class="a" style="left:0;top:1011px;width:1919px;height:2px;background:#111"></div>
<div class="a" style="left:0;top:1013px;width:1919px;height:22px;background:linear-gradient(#e4e3ea,#d6d5de)"></div>
<div class="a" style="left:0;top:1035px;width:1919px;height:2px;background:#222"></div>
<div class="a" style="left:0;top:1037px;width:1919px;height:1px;background:#e8f0f8"></div>
<div class="a" style="left:7px;top:1015px;font-size:15px;line-height:18px;color:#111"><span class="c">选择元素：</span></div>
<div class="a mono" style="left:82px;top:1016px;font-size:13px;line-height:18px;color:#111">0</div>
<div class="a mono" style="left:96px;top:1015px;font-size:13.2px;line-height:18px;color:#5a9ad8;white-space:nowrap">[2024-05-28 11:10:33.987][info][</div>
<div class="a" style="left:352px;top:1015px;font-size:14px;line-height:18px;color:#4a8ac8;white-space:nowrap"><span class="c">程序执行</span></div>
<div class="a mono" style="left:409px;top:1015px;font-size:13.2px;line-height:18px;color:#4a8ac8">]</div>
<div class="a" style="left:419px;top:1015px;font-size:14px;line-height:18px;color:#4a8ac8;white-space:nowrap"><span class="c">测量程序已执行结束。</span></div>
<div class="a mono" style="left:1421px;top:1016px;font-size:14px;line-height:18px;color:#111;white-space:nowrap;letter-spacing:-0.6px">0day(s) 0:0:2.593/11:10-11:10</div>
<div class="a" style="left:1660px;top:1015px;font-size:14.5px;line-height:18px;color:#111;white-space:nowrap"><span class="c">程序执行次数</span></div>
<div class="a mono" style="left:1745px;top:1016px;font-size:14px;line-height:18px;color:#111;white-space:pre;letter-spacing:-0.6px">: 1 / 1</div>
<div class="a" style="left:1807px;top:1014px;width:1px;height:20px;background:#bbb"></div>
<div class="a" style="left:1815px;top:1015px;font-size:14.5px;line-height:18px;color:#111"><span class="c">寻边参数设置</span></div>
<div class="a" style="left:1912px;top:1013px;width:2px;height:22px;background:#333"></div>


</body></html>
